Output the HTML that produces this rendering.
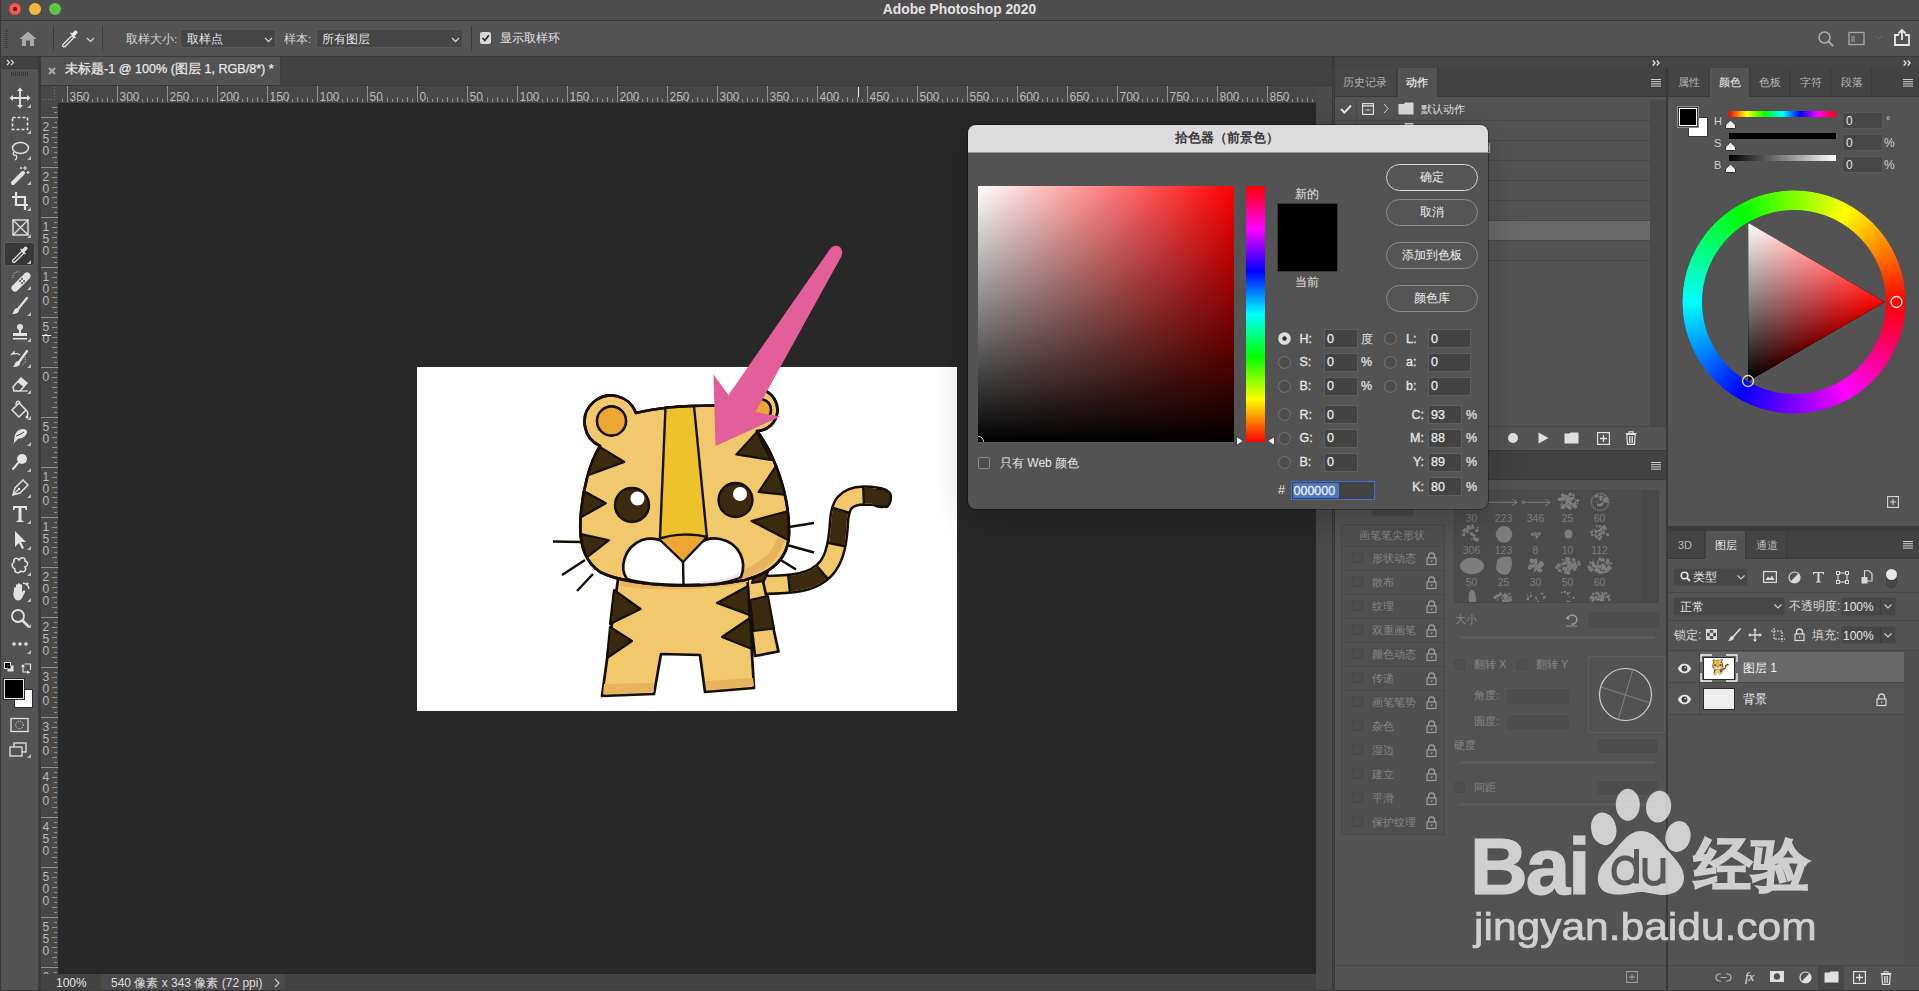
<!DOCTYPE html>
<html><head><meta charset="utf-8">
<style>
*{box-sizing:border-box;margin:0;padding:0}
html,body{width:1919px;height:991px;overflow:hidden;background:#535353;font-family:"Liberation Sans",sans-serif;color:#d6d6d6;font-size:12px;position:relative}
.a{position:absolute}
.t{position:absolute;white-space:nowrap;line-height:1}
svg{overflow:visible}
.pl{mix-blend-mode:screen}
@supports (mix-blend-mode:plus-lighter){.pl{mix-blend-mode:plus-lighter}}
</style></head>
<body>
<div class="a" style="left:0;top:0;width:1919px;height:21px;background:#4e4e4e;border-bottom:1px solid #363636"></div>
<div class="a" style="left:0;top:0;width:1px;height:991px;background:#3a3a3a;z-index:50"></div>
<div class="a" style="left:9px;top:3px;width:12px;height:12px;border-radius:50%;background:#ec5f58;box-shadow:inset 0 0 0 0.5px #c9463f"></div>
<div class="a" style="left:13px;top:7px;width:4px;height:4px;border-radius:50%;background:#6e0a06"></div>
<div class="a" style="left:29px;top:3px;width:12px;height:12px;border-radius:50%;background:#f2b83c"></div>
<div class="a" style="left:49px;top:3px;width:12px;height:12px;border-radius:50%;background:#5ec244"></div>
<div class="t" style="left:0;width:1919px;text-align:center;top:3px;font-size:13.8px;font-weight:bold;color:#e2e2e2">Adobe Photoshop 2020</div>
<div class="a" style="left:0;top:21px;width:1919px;height:36px;background:#535353;border-bottom:1px solid #3a3a3a"></div>
<svg class="a" style="left:5px;top:29px" width="4" height="20" fill="#3c3c3c"><rect x="0" y="0" width="3" height="1"/><rect x="0" y="2" width="3" height="1"/><rect x="0" y="4" width="3" height="1"/><rect x="0" y="6" width="3" height="1"/><rect x="0" y="8" width="3" height="1"/><rect x="0" y="10" width="3" height="1"/><rect x="0" y="12" width="3" height="1"/><rect x="0" y="14" width="3" height="1"/><rect x="0" y="16" width="3" height="1"/><rect x="0" y="18" width="3" height="1"/></svg>
<svg class="a" style="left:19px;top:31px" width="18" height="16" viewBox="0 0 18 16"><path d="M9 0.5 L17.5 8 L15 8 L15 15 L11 15 L11 9.5 L7 9.5 L7 15 L3 15 L3 8 L0.5 8 Z" fill="#a9a9a9"/></svg>
<div class="a" style="left:53px;top:26px;width:1px;height:25px;background:#3c3c3c"></div>
<svg class="a" style="left:61px;top:29px" width="19" height="19" viewBox="0 0 19 19"><path d="M3 16.5 L11 8.5" stroke="#e8e8e8" stroke-width="4" stroke-linecap="round" fill="none"/><path d="M3 16.5 L11 8.5" stroke="#535353" stroke-width="1.6" stroke-linecap="round" fill="none"/><path d="M9.5 5 L14 9.5 L15 8.5 L13.5 7 L16.5 4 A2 2 0 0 0 14 1.5 L11 4.5 L9.5 3 Z" fill="#e8e8e8"/></svg>
<svg class="a" style="left:86px;top:37px" width="9" height="6"><path d="M1 1 L4.5 4.5 L8 1" stroke="#d0d0d0" stroke-width="1.3" fill="none"/></svg>
<div class="a" style="left:102px;top:26px;width:1px;height:25px;background:#3c3c3c"></div>
<div class="t" style="left:126px;top:33px;font-size:11.7px;color:#d4d4d4">取样大小:</div>
<div class="a" style="left:180px;top:29px;width:96px;height:19px;background:#454545;border:1px solid #595959;border-radius:3px"></div>
<div class="t" style="left:187px;top:34px;font-size:11.5px;color:#e6e6e6">取样点</div>
<svg class="a" style="left:264px;top:37px" width="9" height="6"><path d="M1 1 L4.5 4.5 L8 1" stroke="#d0d0d0" stroke-width="1.3" fill="none"/></svg>
<div class="t" style="left:284px;top:33px;font-size:11.7px;color:#d4d4d4">样本:</div>
<div class="a" style="left:316px;top:29px;width:147px;height:19px;background:#454545;border:1px solid #595959;border-radius:3px"></div>
<div class="t" style="left:322px;top:34px;font-size:11.5px;color:#e6e6e6">所有图层</div>
<svg class="a" style="left:451px;top:37px" width="9" height="6"><path d="M1 1 L4.5 4.5 L8 1" stroke="#d0d0d0" stroke-width="1.3" fill="none"/></svg>
<div class="a" style="left:471px;top:26px;width:1px;height:25px;background:#3c3c3c"></div>
<div class="a" style="left:480px;top:32px;width:11px;height:12px;background:#d8d8d8;border-radius:2px"></div>
<svg class="a" style="left:480px;top:32px" width="11" height="12"><path d="M2.5 6 L4.8 8.5 L8.8 3.2" stroke="#2a2a2a" stroke-width="1.7" fill="none"/></svg>
<div class="t" style="left:500px;top:33px;font-size:11.5px;color:#e0e0e0">显示取样环</div>
<svg class="a" style="left:1817px;top:30px" width="18" height="18"><circle cx="7.5" cy="7.5" r="5.5" stroke="#a8a8a8" stroke-width="1.6" fill="none"/><path d="M11.5 11.5 L16 16" stroke="#a8a8a8" stroke-width="1.8"/></svg>
<svg class="a" style="left:1848px;top:31px" width="18" height="15"><rect x="1" y="1.5" width="15" height="12" stroke="#a8a8a8" stroke-width="1.3" fill="none"/><path d="M4 5 V11 M6 5 V11" stroke="#a8a8a8" stroke-width="1"/></svg>
<svg class="a" style="left:1875px;top:35px" width="8" height="5"><path d="M1 1 L4 4 L7 1" stroke="#6e6e6e" stroke-width="1" fill="none"/></svg>
<svg class="a" style="left:1893px;top:28px" width="18" height="19"><path d="M6 7 H2 V17 H16 V7 H12" stroke="#e6e6e6" stroke-width="1.8" fill="none"/><path d="M9 12 V2 M5.5 5.5 L9 2 L12.5 5.5" stroke="#e6e6e6" stroke-width="1.8" fill="none"/></svg>
<div class="a" style="left:1px;top:57px;width:37px;height:934px;background:#535353"></div>
<div class="a" style="left:1px;top:57px;width:37px;height:12px;background:#424242;border-bottom:1px solid #3a3a3a"></div>
<svg class="a" style="left:6px;top:59px" width="10" height="7"><path d="M1 1 L3.5 3.5 L1 6 M5 1 L7.5 3.5 L5 6" stroke="#d8d8d8" stroke-width="1.2" fill="none"/></svg>
<svg class="a" style="left:11px;top:72px" width="18" height="4" fill="#3a3a3a"><rect x="0" y="0" width="1" height="4"/><rect x="2" y="0" width="1" height="4"/><rect x="4" y="0" width="1" height="4"/><rect x="6" y="0" width="1" height="4"/><rect x="8" y="0" width="1" height="4"/><rect x="10" y="0" width="1" height="4"/><rect x="12" y="0" width="1" height="4"/><rect x="14" y="0" width="1" height="4"/><rect x="16" y="0" width="1" height="4"/></svg>
<div class="a" style="left:38px;top:57px;width:3px;height:934px;background:#3b3b3b"></div>
<div class="a" style="left:4px;top:242px;width:31px;height:24px;background:#383838;border:1px solid #5e5e5e;border-radius:3px"></div>
<svg class="a" style="left:8px;top:86px" width="26" height="24" viewBox="0 0 26 24"><path d="M12 3 V21 M3 12 H21" stroke="#e2e2e2" stroke-width="1.8"/><path d="M12 1.5 L9 5 H15Z M12 22.5 L9 19 H15Z M1.5 12 L5 9 V15Z M22.5 12 L19 9 V15Z" fill="#e2e2e2"/><path d="M23 18 L23 22 L19 22 Z" fill="#bdbdbd"/></svg>
<svg class="a" style="left:8px;top:112px" width="26" height="24" viewBox="0 0 26 24"><rect x="4.5" y="5.5" width="15" height="12" stroke="#e2e2e2" fill="none" stroke-width="1.6" stroke-dasharray="3 2"/><path d="M23 18 L23 22 L19 22 Z" fill="#bdbdbd"/></svg>
<svg class="a" style="left:8px;top:138px" width="26" height="24" viewBox="0 0 26 24"><ellipse cx="12.5" cy="10" rx="8" ry="5.5" stroke="#e2e2e2" fill="none" stroke-width="1.5"/><path d="M6 14 C4 16 6 18 8 17 C9 19 9 21 7 22" stroke="#e2e2e2" fill="none" stroke-width="1.3"/><path d="M23 18 L23 22 L19 22 Z" fill="#bdbdbd"/></svg>
<svg class="a" style="left:8px;top:163px" width="26" height="24" viewBox="0 0 26 24"><path d="M5 20 L15 10" stroke="#e2e2e2" stroke-width="4" stroke-linecap="round"/><path d="M17 3 V7 M15 5 H19 M20 8 V11 M18.5 9.5 H21.5 M13 4 V6 M12 5 H14" stroke="#e2e2e2" stroke-width="1.2"/><path d="M23 18 L23 22 L19 22 Z" fill="#bdbdbd"/></svg>
<svg class="a" style="left:8px;top:189px" width="26" height="24" viewBox="0 0 26 24"><path d="M8 3 V16 H20 M4 8 H17 V21" stroke="#e2e2e2" fill="none" stroke-width="2.2"/><path d="M23 18 L23 22 L19 22 Z" fill="#bdbdbd"/></svg>
<svg class="a" style="left:8px;top:216px" width="26" height="24" viewBox="0 0 26 24"><rect x="5" y="4" width="15" height="15" stroke="#e2e2e2" fill="none" stroke-width="1.4"/><path d="M5 4 L20 19 M20 4 L5 19" stroke="#e2e2e2" fill="none" stroke-width="1.2"/><path d="M23 18 L23 22 L19 22 Z" fill="#bdbdbd"/></svg>
<svg class="a" style="left:8px;top:242px" width="26" height="24" viewBox="0 0 26 24"><path d="M6 19 L14 11" stroke="#e2e2e2" stroke-width="4" stroke-linecap="round"/><path d="M6 19 L14 11" stroke="#383838" stroke-width="1.6" stroke-linecap="round"/><path d="M12.5 8 L17 12.5 L18 11.5 L16.5 10 L19.5 7 A2 2 0 0 0 17 4.5 L14 7.5 L12.5 6 Z" fill="#e2e2e2"/><path d="M23 18 L23 22 L19 22 Z" fill="#bdbdbd"/></svg>
<svg class="a" style="left:8px;top:268px" width="26" height="24" viewBox="0 0 26 24"><path d="M7 20 L19 8" stroke="#e2e2e2" stroke-width="7" stroke-linecap="round"/><circle cx="12" cy="13" r="1" fill="#535353"/><circle cx="14" cy="15" r="1" fill="#535353"/><circle cx="14" cy="11" r="1" fill="#535353"/><circle cx="16" cy="13" r="1" fill="#535353"/><path d="M5 10 A5 5 0 0 1 11 4" stroke="#e2e2e2" fill="none" stroke-width="1" stroke-dasharray="1 1.2"/><path d="M23 18 L23 22 L19 22 Z" fill="#bdbdbd"/></svg>
<svg class="a" style="left:8px;top:294px" width="26" height="24" viewBox="0 0 26 24"><path d="M10 15 L19 4" stroke="#e2e2e2" stroke-width="2.2" stroke-linecap="round"/><path d="M9.5 14 C6 14 6 18 4 20 C8 20 11 19 11 16 Z" fill="#e2e2e2"/><path d="M23 18 L23 22 L19 22 Z" fill="#bdbdbd"/></svg>
<svg class="a" style="left:8px;top:320px" width="26" height="24" viewBox="0 0 26 24"><circle cx="12" cy="7" r="3" fill="#e2e2e2"/><rect x="11" y="9" width="2" height="4" fill="#e2e2e2"/><rect x="5" y="13" width="14" height="3" fill="#e2e2e2"/><rect x="5" y="18" width="14" height="1.5" fill="#e2e2e2"/><path d="M23 18 L23 22 L19 22 Z" fill="#bdbdbd"/></svg>
<svg class="a" style="left:8px;top:346px" width="26" height="24" viewBox="0 0 26 24"><path d="M11 16 L19 5" stroke="#e2e2e2" stroke-width="2.2" stroke-linecap="round"/><path d="M10.5 15 C7 15 7 19 5 21 C9 21 12 20 12 17 Z" fill="#e2e2e2"/><path d="M3 9 L6 6 L6 8 C9 7 11 8 12 9" stroke="#e2e2e2" fill="none" stroke-width="1.3"/><path d="M17 11 A6 6 0 0 1 14 19" stroke="#e2e2e2" fill="none" stroke-width="1" stroke-dasharray="1 1.2"/><path d="M23 18 L23 22 L19 22 Z" fill="#bdbdbd"/></svg>
<svg class="a" style="left:8px;top:372px" width="26" height="24" viewBox="0 0 26 24"><path d="M5 15 L13 6 L19 11 L12 19 L6 19 Z" stroke="#e2e2e2" fill="none" stroke-width="1.5"/><path d="M13 6 L19 11 L15.5 15 L9.5 10 Z" fill="#e2e2e2"/><path d="M12 19 H20" stroke="#e2e2e2" fill="none" stroke-width="1.2"/><path d="M23 18 L23 22 L19 22 Z" fill="#bdbdbd"/></svg>
<svg class="a" style="left:8px;top:398px" width="26" height="24" viewBox="0 0 26 24"><path d="M4 12 L11 5 L18 12 L11 19 Z" stroke="#e2e2e2" fill="none" stroke-width="1.5"/><path d="M8 7 C8 2 12 2 12 6" stroke="#e2e2e2" fill="none" stroke-width="1.3"/><path d="M18 12 C20 14 20 17 19 19" stroke="#e2e2e2" fill="none" stroke-width="1.5"/><circle cx="19" cy="19" r="1.5" fill="#e2e2e2"/><path d="M23 18 L23 22 L19 22 Z" fill="#bdbdbd"/></svg>
<svg class="a" style="left:8px;top:424px" width="26" height="24" viewBox="0 0 26 24"><path d="M6 18 C6 10 9 5 15 5 C20 5 20 9 17 12 C14 15 12 14 10 15 L5 20" fill="#e2e2e2"/><path d="M8 12 C11 11 13 10 16 8" stroke="#535353" stroke-width="1"/><path d="M23 18 L23 22 L19 22 Z" fill="#bdbdbd"/></svg>
<svg class="a" style="left:8px;top:450px" width="26" height="24" viewBox="0 0 26 24"><circle cx="14" cy="9" r="5" fill="#e2e2e2"/><path d="M11 12 L5 19" stroke="#e2e2e2" stroke-width="2" stroke-linecap="round"/><path d="M23 18 L23 22 L19 22 Z" fill="#bdbdbd"/></svg>
<svg class="a" style="left:8px;top:476px" width="26" height="24" viewBox="0 0 26 24"><path d="M5 19 L7 12 L15 4 L20 9 L12 17 Z" stroke="#e2e2e2" fill="none" stroke-width="1.5"/><path d="M5 19 L10.5 13.5" stroke="#e2e2e2" fill="none" stroke-width="1.2"/><circle cx="11" cy="13" r="1.2" fill="#e2e2e2"/><path d="M23 18 L23 22 L19 22 Z" fill="#bdbdbd"/></svg>
<svg class="a" style="left:8px;top:502px" width="26" height="24" viewBox="0 0 26 24"><path d="M5 4 H19 V8 H17.5 L17 6 H13.5 V18.5 L15.5 19 V20 H8.5 V19 L10.5 18.5 V6 H7 L6.5 8 H5 Z" fill="#e2e2e2"/><path d="M23 18 L23 22 L19 22 Z" fill="#bdbdbd"/></svg>
<svg class="a" style="left:8px;top:528px" width="26" height="24" viewBox="0 0 26 24"><path d="M7 3 L7 19 L11 15 L14 21 L16 20 L13 14 L18 14 Z" fill="#e2e2e2"/><path d="M23 18 L23 22 L19 22 Z" fill="#bdbdbd"/></svg>
<svg class="a" style="left:8px;top:554px" width="26" height="24" viewBox="0 0 26 24"><path d="M6 8 C5 4 9 3 11 6 C13 3 18 3 17 7 C21 8 20 12 17 13 C19 16 16 19 13 17 C11 20 6 19 7 15 C4 14 3 10 6 8 Z" stroke="#e2e2e2" fill="none" stroke-width="1.5"/><path d="M23 18 L23 22 L19 22 Z" fill="#bdbdbd"/></svg>
<svg class="a" style="left:8px;top:580px" width="26" height="24" viewBox="0 0 26 24"><path d="M8 20 C5 17 5 13 6 11 V8 C6 7 8 7 8 8 V11 V5 C8 4 10 4 10 5 V11 V4 C10 3 12 3 12 4 V11 V5 C12 4 14 4 14 5 V12 L15 11 C16 10 18 11 17 12 L14 18 C13 20 11 21 8 20 Z" fill="#e2e2e2"/><path d="M15 3 A7 7 0 0 1 21 9" stroke="#e2e2e2" fill="none" stroke-width="1.3"/><path d="M19 2 L21 4 L18 5 Z" fill="#e2e2e2"/><path d="M23 18 L23 22 L19 22 Z" fill="#bdbdbd"/></svg>
<svg class="a" style="left:8px;top:606px" width="26" height="24" viewBox="0 0 26 24"><circle cx="10" cy="10" r="6" stroke="#e2e2e2" fill="none" stroke-width="1.8"/><path d="M14.5 14.5 L20 20" stroke="#e2e2e2" stroke-width="2.5" stroke-linecap="round"/><path d="M23 18 L23 22 L19 22 Z" fill="#bdbdbd"/></svg>
<svg class="a" style="left:8px;top:632px" width="26" height="24" viewBox="0 0 26 24"><circle cx="6" cy="12" r="1.8" fill="#e2e2e2"/><circle cx="12" cy="12" r="1.8" fill="#e2e2e2"/><circle cx="18" cy="12" r="1.8" fill="#e2e2e2"/></svg>
<svg class="a" style="left:27px;top:650px" width="5" height="5"><path d="M4 0 V4 H0 Z" fill="#bdbdbd"/></svg>
<svg class="a" style="left:4px;top:662px" width="10" height="10"><rect x="0.5" y="0.5" width="6" height="6" fill="#000" stroke="#e2e2e2"/><rect x="3.5" y="3.5" width="6" height="6" fill="#e2e2e2"/><rect x="3.5" y="3.5" width="3" height="3" fill="#000"/></svg>
<svg class="a" style="left:21px;top:662px" width="12" height="12"><path d="M2 5 V10 H8 M3.5 2 H9.5 V8" stroke="#e2e2e2" stroke-width="1.2" fill="none"/><path d="M0 5 L2 2 L4 5 Z M6 8.5 L9.5 10.5 L6 12Z" fill="#e2e2e2"/></svg>
<div class="a" style="left:14px;top:689px;width:19px;height:19px;background:#fff;border:1px solid #2a2a2a"></div>
<div class="a" style="left:4px;top:679px;width:20px;height:20px;background:#000;border:1px solid #e8e8e8;box-shadow:0 0 0 1px #2a2a2a"></div>
<svg class="a" style="left:10px;top:717px" width="20" height="17"><rect x="1" y="1.5" width="17" height="13" stroke="#e2e2e2" stroke-width="1.3" fill="none"/><circle cx="9.5" cy="8" r="3.8" stroke="#e2e2e2" stroke-width="1" stroke-dasharray="1 1" fill="none"/></svg>
<svg class="a" style="left:8px;top:742px" width="26" height="18"><rect x="6" y="1" width="12" height="9" stroke="#e2e2e2" stroke-width="1.3" fill="#535353"/><rect x="2" y="5" width="12" height="9" stroke="#e2e2e2" stroke-width="1.3" fill="#535353"/><path d="M23 12 V16 H19 Z" fill="#bdbdbd"/></svg>
<div class="a" style="left:41px;top:57px;width:1292px;height:29px;background:#424242;border-bottom:1px solid #383838"></div>
<div class="a" style="left:41px;top:57px;width:240px;height:28px;background:#535353;border-right:1px solid #3e3e3e"></div>
<svg class="a" style="left:48px;top:67px" width="8" height="8"><path d="M1 1 L7 7 M7 1 L1 7" stroke="#a8a8a8" stroke-width="2"/></svg>
<div class="t" style="left:65px;top:63px;font-size:12.6px;color:#e8e8e8;-webkit-text-stroke:0.25px #e8e8e8">未标题-1 @ 100% (图层 1, RGB/8*) *</div>
<div class="a" style="left:41px;top:86px;width:1275px;height:17px;background:#474747"></div>
<div class="a" style="left:41px;top:103px;width:17px;height:871px;background:#474747"></div>
<svg class="a" style="left:0;top:0" width="1320" height="104"><path d="M62.5 99V102M67.5 86V102M72.5 99V102M77.5 97V102M82.5 99V102M87.5 97V102M92.5 99V102M97.5 97V102M102.5 99V102M107.5 97V102M112.5 99V102M117.5 86V102M122.5 99V102M127.5 97V102M132.5 99V102M137.5 97V102M142.5 99V102M147.5 97V102M152.5 99V102M157.5 97V102M162.5 99V102M167.5 86V102M172.5 99V102M177.5 97V102M182.5 99V102M187.5 97V102M192.5 99V102M197.5 97V102M202.5 99V102M207.5 97V102M212.5 99V102M217.5 86V102M222.5 99V102M227.5 97V102M232.5 99V102M237.5 97V102M242.5 99V102M247.5 97V102M252.5 99V102M257.5 97V102M262.5 99V102M267.5 86V102M272.5 99V102M277.5 97V102M282.5 99V102M287.5 97V102M292.5 99V102M297.5 97V102M302.5 99V102M307.5 97V102M312.5 99V102M317.5 86V102M322.5 99V102M327.5 97V102M332.5 99V102M337.5 97V102M342.5 99V102M347.5 97V102M352.5 99V102M357.5 97V102M362.5 99V102M367.5 86V102M372.5 99V102M377.5 97V102M382.5 99V102M387.5 97V102M392.5 99V102M397.5 97V102M402.5 99V102M407.5 97V102M412.5 99V102M417.5 86V102M422.5 99V102M427.5 97V102M432.5 99V102M437.5 97V102M442.5 99V102M447.5 97V102M452.5 99V102M457.5 97V102M462.5 99V102M467.5 86V102M472.5 99V102M477.5 97V102M482.5 99V102M487.5 97V102M492.5 99V102M497.5 97V102M502.5 99V102M507.5 97V102M512.5 99V102M517.5 86V102M522.5 99V102M527.5 97V102M532.5 99V102M537.5 97V102M542.5 99V102M547.5 97V102M552.5 99V102M557.5 97V102M562.5 99V102M567.5 86V102M572.5 99V102M577.5 97V102M582.5 99V102M587.5 97V102M592.5 99V102M597.5 97V102M602.5 99V102M607.5 97V102M612.5 99V102M617.5 86V102M622.5 99V102M627.5 97V102M632.5 99V102M637.5 97V102M642.5 99V102M647.5 97V102M652.5 99V102M657.5 97V102M662.5 99V102M667.5 86V102M672.5 99V102M677.5 97V102M682.5 99V102M687.5 97V102M692.5 99V102M697.5 97V102M702.5 99V102M707.5 97V102M712.5 99V102M717.5 86V102M722.5 99V102M727.5 97V102M732.5 99V102M737.5 97V102M742.5 99V102M747.5 97V102M752.5 99V102M757.5 97V102M762.5 99V102M767.5 86V102M772.5 99V102M777.5 97V102M782.5 99V102M787.5 97V102M792.5 99V102M797.5 97V102M802.5 99V102M807.5 97V102M812.5 99V102M817.5 86V102M822.5 99V102M827.5 97V102M832.5 99V102M837.5 97V102M842.5 99V102M847.5 97V102M852.5 99V102M857.5 97V102M862.5 99V102M867.5 86V102M872.5 99V102M877.5 97V102M882.5 99V102M887.5 97V102M892.5 99V102M897.5 97V102M902.5 99V102M907.5 97V102M912.5 99V102M917.5 86V102M922.5 99V102M927.5 97V102M932.5 99V102M937.5 97V102M942.5 99V102M947.5 97V102M952.5 99V102M957.5 97V102M962.5 99V102M967.5 86V102M972.5 99V102M977.5 97V102M982.5 99V102M987.5 97V102M992.5 99V102M997.5 97V102M1002.5 99V102M1007.5 97V102M1012.5 99V102M1017.5 86V102M1022.5 99V102M1027.5 97V102M1032.5 99V102M1037.5 97V102M1042.5 99V102M1047.5 97V102M1052.5 99V102M1057.5 97V102M1062.5 99V102M1067.5 86V102M1072.5 99V102M1077.5 97V102M1082.5 99V102M1087.5 97V102M1092.5 99V102M1097.5 97V102M1102.5 99V102M1107.5 97V102M1112.5 99V102M1117.5 86V102M1122.5 99V102M1127.5 97V102M1132.5 99V102M1137.5 97V102M1142.5 99V102M1147.5 97V102M1152.5 99V102M1157.5 97V102M1162.5 99V102M1167.5 86V102M1172.5 99V102M1177.5 97V102M1182.5 99V102M1187.5 97V102M1192.5 99V102M1197.5 97V102M1202.5 99V102M1207.5 97V102M1212.5 99V102M1217.5 86V102M1222.5 99V102M1227.5 97V102M1232.5 99V102M1237.5 97V102M1242.5 99V102M1247.5 97V102M1252.5 99V102M1257.5 97V102M1262.5 99V102M1267.5 86V102M1272.5 99V102M1277.5 97V102M1282.5 99V102M1287.5 97V102M1292.5 99V102M1297.5 97V102M1302.5 99V102M1307.5 97V102M1312.5 99V102" stroke="#8e8e8e" stroke-width="1"/><g font-family="Liberation Sans" font-size="12" fill="#b8b8b8"><text x="69.5" y="101">350</text><text x="119.5" y="101">300</text><text x="169.5" y="101">250</text><text x="219.5" y="101">200</text><text x="269.5" y="101">150</text><text x="319.5" y="101">100</text><text x="369.5" y="101">50</text><text x="419.5" y="101">0</text><text x="469.5" y="101">50</text><text x="519.5" y="101">100</text><text x="569.5" y="101">150</text><text x="619.5" y="101">200</text><text x="669.5" y="101">250</text><text x="719.5" y="101">300</text><text x="769.5" y="101">350</text><text x="819.5" y="101">400</text><text x="869.5" y="101">450</text><text x="919.5" y="101">500</text><text x="969.5" y="101">550</text><text x="1019.5" y="101">600</text><text x="1069.5" y="101">650</text><text x="1119.5" y="101">700</text><text x="1169.5" y="101">750</text><text x="1219.5" y="101">800</text><text x="1269.5" y="101">850</text></g></svg>
<svg class="a" style="left:41px;top:86px" width="17" height="17"><path d="M13.5 1 V14 M1 13.5 H14" stroke="#777" stroke-width="1" stroke-dasharray="1 2"/></svg>
<div class="a" style="left:858px;top:87px;width:1px;height:10px;background:#f0f0f0"></div>
<div class="a" style="left:41px;top:103px;width:17px;height:871px;overflow:hidden"><svg class="a" style="left:-41px;top:-103px" width="60" height="980"><path d="M52 107.5H57M54 112.5H57M41 117.5H58M54 122.5H57M52 127.5H57M54 132.5H57M52 137.5H57M54 142.5H57M52 147.5H57M54 152.5H57M52 157.5H57M54 162.5H57M41 167.5H58M54 172.5H57M52 177.5H57M54 182.5H57M52 187.5H57M54 192.5H57M52 197.5H57M54 202.5H57M52 207.5H57M54 212.5H57M41 217.5H58M54 222.5H57M52 227.5H57M54 232.5H57M52 237.5H57M54 242.5H57M52 247.5H57M54 252.5H57M52 257.5H57M54 262.5H57M41 267.5H58M54 272.5H57M52 277.5H57M54 282.5H57M52 287.5H57M54 292.5H57M52 297.5H57M54 302.5H57M52 307.5H57M54 312.5H57M41 317.5H58M54 322.5H57M52 327.5H57M54 332.5H57M52 337.5H57M54 342.5H57M52 347.5H57M54 352.5H57M52 357.5H57M54 362.5H57M41 367.5H58M54 372.5H57M52 377.5H57M54 382.5H57M52 387.5H57M54 392.5H57M52 397.5H57M54 402.5H57M52 407.5H57M54 412.5H57M41 417.5H58M54 422.5H57M52 427.5H57M54 432.5H57M52 437.5H57M54 442.5H57M52 447.5H57M54 452.5H57M52 457.5H57M54 462.5H57M41 467.5H58M54 472.5H57M52 477.5H57M54 482.5H57M52 487.5H57M54 492.5H57M52 497.5H57M54 502.5H57M52 507.5H57M54 512.5H57M41 517.5H58M54 522.5H57M52 527.5H57M54 532.5H57M52 537.5H57M54 542.5H57M52 547.5H57M54 552.5H57M52 557.5H57M54 562.5H57M41 567.5H58M54 572.5H57M52 577.5H57M54 582.5H57M52 587.5H57M54 592.5H57M52 597.5H57M54 602.5H57M52 607.5H57M54 612.5H57M41 617.5H58M54 622.5H57M52 627.5H57M54 632.5H57M52 637.5H57M54 642.5H57M52 647.5H57M54 652.5H57M52 657.5H57M54 662.5H57M41 667.5H58M54 672.5H57M52 677.5H57M54 682.5H57M52 687.5H57M54 692.5H57M52 697.5H57M54 702.5H57M52 707.5H57M54 712.5H57M41 717.5H58M54 722.5H57M52 727.5H57M54 732.5H57M52 737.5H57M54 742.5H57M52 747.5H57M54 752.5H57M52 757.5H57M54 762.5H57M41 767.5H58M54 772.5H57M52 777.5H57M54 782.5H57M52 787.5H57M54 792.5H57M52 797.5H57M54 802.5H57M52 807.5H57M54 812.5H57M41 817.5H58M54 822.5H57M52 827.5H57M54 832.5H57M52 837.5H57M54 842.5H57M52 847.5H57M54 852.5H57M52 857.5H57M54 862.5H57M41 867.5H58M54 872.5H57M52 877.5H57M54 882.5H57M52 887.5H57M54 892.5H57M52 897.5H57M54 902.5H57M52 907.5H57M54 912.5H57M41 917.5H58M54 922.5H57M52 927.5H57M54 932.5H57M52 937.5H57M54 942.5H57M52 947.5H57M54 952.5H57M52 957.5H57M54 962.5H57M41 967.5H58M54 972.5H57" stroke="#8e8e8e" stroke-width="1"/><g font-family="Liberation Sans" font-size="12" fill="#b8b8b8"><text x="42.5" y="130.5">2</text><text x="42.5" y="142.5">5</text><text x="42.5" y="154.5">0</text><text x="42.5" y="180.5">2</text><text x="42.5" y="192.5">0</text><text x="42.5" y="204.5">0</text><text x="42.5" y="230.5">1</text><text x="42.5" y="242.5">5</text><text x="42.5" y="254.5">0</text><text x="42.5" y="280.5">1</text><text x="42.5" y="292.5">0</text><text x="42.5" y="304.5">0</text><text x="42.5" y="330.5">5</text><text x="42.5" y="342.5">0</text><text x="42.5" y="380.5">0</text><text x="42.5" y="430.5">5</text><text x="42.5" y="442.5">0</text><text x="42.5" y="480.5">1</text><text x="42.5" y="492.5">0</text><text x="42.5" y="504.5">0</text><text x="42.5" y="530.5">1</text><text x="42.5" y="542.5">5</text><text x="42.5" y="554.5">0</text><text x="42.5" y="580.5">2</text><text x="42.5" y="592.5">0</text><text x="42.5" y="604.5">0</text><text x="42.5" y="630.5">2</text><text x="42.5" y="642.5">5</text><text x="42.5" y="654.5">0</text><text x="42.5" y="680.5">3</text><text x="42.5" y="692.5">0</text><text x="42.5" y="704.5">0</text><text x="42.5" y="730.5">3</text><text x="42.5" y="742.5">5</text><text x="42.5" y="754.5">0</text><text x="42.5" y="780.5">4</text><text x="42.5" y="792.5">0</text><text x="42.5" y="804.5">0</text><text x="42.5" y="830.5">4</text><text x="42.5" y="842.5">5</text><text x="42.5" y="854.5">0</text><text x="42.5" y="880.5">5</text><text x="42.5" y="892.5">0</text><text x="42.5" y="904.5">0</text><text x="42.5" y="930.5">5</text><text x="42.5" y="942.5">5</text><text x="42.5" y="954.5">0</text><text x="42.5" y="980.5">6</text><text x="42.5" y="992.5">0</text><text x="42.5" y="1004.5">0</text></g></svg></div>
<div class="a" style="left:42px;top:335px;width:9px;height:1px;background:#f0f0f0"></div>
<div class="a" style="left:58px;top:103px;width:1258px;height:871px;background:#282828"></div>
<div class="a" style="left:1316px;top:86px;width:16px;height:888px;background:#4a4a4a"></div>
<div class="a" style="left:41px;top:974px;width:1275px;height:17px;background:#434343"></div>
<div class="a" style="left:1316px;top:974px;width:16px;height:17px;background:#4b4b4b"></div>
<div class="a" style="left:0;top:990px;width:1919px;height:1px;background:#383838;z-index:5"></div>
<div class="a" style="left:101px;top:974px;width:184px;height:17px;background:#4a4a4a"></div>
<div class="t" style="left:56px;top:977px;font-size:12px;color:#e6e6e6">100%</div>
<div class="t" style="left:111px;top:977px;font-size:12px;color:#dcdcdc">540 像素 x 343 像素 (72 ppi)</div>
<svg class="a" style="left:274px;top:978px" width="6" height="10"><path d="M1 1 L5 5 L1 9" stroke="#cfcfcf" stroke-width="1.2" fill="none"/></svg>
<div class="a" style="left:1332px;top:57px;width:3px;height:934px;background:#3a3a3a"></div>
<div class="a" style="left:1333px;top:68px;width:1px;height:923px;background:#444"></div>
<div class="a" style="left:417px;top:367px;width:540px;height:344px;background:#fff"></div>
<svg class="a" style="left:417px;top:367px" width="540" height="344" viewBox="417 367 540 344"><path d="M756 585 C790 585 815 584 828 566 C836 555 838 540 839 522 C840 505 845 496 864 495.5 C872 495.5 878 496.5 881 498" stroke="#140e06" stroke-width="20.5" fill="none" stroke-linecap="round"/><path d="M756 585 C790 585 815 584 828 566 C836 555 838 540 839 522 C840 505 845 496 864 495.5 C872 495.5 878 496.5 881 498" stroke="#f1c86c" stroke-width="15.5" fill="none"/><path d="M756 585 C790 585 815 584 828 566 C836 555 838 540 839 522 C840 505 845 496 864 495.5 C872 495.5 878 496.5 881 498" stroke="#3b2b0e" stroke-width="15.5" fill="none" stroke-dasharray="0 33 36 31.6 34.9 29.1 40" stroke-linecap="butt"/><path d="M878 488 C886 489 891 492 891 497 C891 501 889 505 887 507 L876 506 Z" fill="#3b2b0e" stroke="#140e06" stroke-width="2.4" stroke-linejoin="round"/><path d="M872 489.5 L880 490 L881 505 L872 505 Z" fill="#3b2b0e"/><path d="M789.9 593.0L788.1 575.1M828.2 579.0L816.4 565.4M845.4 546.3L827.7 542.9M849.5 512.7L832.2 507.5M863.8 504.5L863.1 486.5" stroke="#140e06" stroke-width="2.2"/><path d="M745 572 L761 572 L778.5 651.5 L755 656 Z" fill="#f1c86c" stroke="#140e06" stroke-width="2.7" stroke-linejoin="round"/><path d="M750 600 L768 596 L774 628.5 L753.5 631 Z M755 572 L768 572 L764 581 L752 583 Z" fill="#3b2b0e" stroke="#140e06" stroke-width="2" stroke-linejoin="round"/><path d="M619 572 L602 696 L654 694 L661 654 L700 655 L705 692 L754 688 L747 572 Z" fill="#f1c86c" stroke="#140e06" stroke-width="2.7" stroke-linejoin="round"/><path d="M604 684 L653 683 L654 692 L603 694 Z M706 681 L753 678 L754 686 L706 690 Z" fill="#e9b35e"/><path d="M620 586 C660 592 720 590 748 582 L748 578 C720 586 660 588 620 580 Z" fill="#eab55c"/><path d="M614 590 L640.5 609 L610 624 Z M610 627 L632 641 L607 658 Z M748 586 L717 603 L749.5 615 Z M750 618 L722 637 L752 649 Z" fill="#3b2b0e" stroke="#140e06" stroke-width="2.2" stroke-linejoin="round"/><path d="M600 446 A26.5 26.5 0 1 1 636 413 C660 407 690 405.5 712 405.5 C725 405.5 733 404 738 400 A21 21 0 1 1 757 431 C775 455 789 495 789 530 C790 555 775 572 745 580 C720 585 700 585.5 683 585.5 C650 585 620 582 600 572 C585 562 579 545 580.5 520 C582 490 590 462 600 446 Z" fill="#f1c86c" stroke="#140e06" stroke-width="2.7" stroke-linejoin="round"/><circle cx="611.5" cy="421" r="14.5" fill="#eba733" stroke="#140e06" stroke-width="2.4"/><circle cx="760" cy="410" r="11" fill="#eba733" stroke="#140e06" stroke-width="2.4"/><path d="M786 505 C790 540 782 565 745 578 C725 583 705 584 690 584 C720 581 750 572 770 552 C780 538 784 520 786 505 Z" fill="#e8b35e"/><path d="M665.5 407.5 L694 406 L707 538 L660 538 Z" fill="#eec22c" stroke="#140e06" stroke-width="2.4" stroke-linejoin="round"/><defs><clipPath id="hc"><path d="M600 446 A26.5 26.5 0 1 1 636 413 C660 407 690 405.5 712 405.5 C725 405.5 733 404 738 400 A21 21 0 1 1 757 431 C775 455 789 495 789 530 C790 555 775 572 745 580 C720 585 700 585.5 683 585.5 C650 585 620 582 600 572 C585 562 579 545 580.5 520 C582 490 590 462 600 446 Z"/></clipPath></defs><g clip-path="url(#hc)"><path d="M598 446 L624.3 462 L586 476 Z M581 489.5 L605.8 503.3 L576 520 Z M576 533 L609 540.2 L581 562 Z M757 432 L736.4 454.5 L771 460 Z M776 466 L758.6 492 L787 495 Z M792 510 L751.5 521 L794 543 Z" fill="#3b2b0e" stroke="#140e06" stroke-width="2.2" stroke-linejoin="round"/></g><path d="M600 446 A26.5 26.5 0 1 1 636 413 C660 407 690 405.5 712 405.5 C725 405.5 733 404 738 400 A21 21 0 1 1 757 431 C775 455 789 495 789 530 C790 555 775 572 745 580 C720 585 700 585.5 683 585.5 C650 585 620 582 600 572 C585 562 579 545 580.5 520 C582 490 590 462 600 446 Z" fill="none" stroke="#140e06" stroke-width="2.7" stroke-linejoin="round"/><circle cx="611.5" cy="421" r="14.5" fill="#eba733" stroke="#140e06" stroke-width="2.4"/><circle cx="760" cy="410" r="11" fill="#eba733" stroke="#140e06" stroke-width="2.4"/><circle cx="632" cy="505" r="17" fill="#3b2b0e" stroke="#140e06" stroke-width="2.4"/><circle cx="637.5" cy="498.5" r="7" fill="#fff"/><circle cx="735.5" cy="500" r="17" fill="#3b2b0e" stroke="#140e06" stroke-width="2.4"/><circle cx="740" cy="494" r="7" fill="#fff"/><path d="M627 579 C620 570 622 548 642 540 C660 535 672 545 683 561 C693 545 705 536 720 539 C740 543 747 562 741 577 C725 583 705 585 683 585 C660 585 640 583 627 579 Z" fill="#fff" stroke="#140e06" stroke-width="2.7" stroke-linejoin="round"/><path d="M683 561 L683.5 585" stroke="#140e06" stroke-width="2.4"/><path d="M700 582 C718 581 733 578 740 572 L739 577 C725 582 712 583.5 700 583.5 Z" fill="#efe2f0"/><path d="M659 539 C672 534 693 533 707 537 L683 562 Z" fill="#eba733" stroke="#140e06" stroke-width="2.4" stroke-linejoin="round"/><path d="M553 541.5 L581 542 M562 575 L585 560 M577 591 L593 574 M789 527 L814 523 M787 545 L814 552.5 M780 559.5 L796 569.5" stroke="#140e06" stroke-width="2.5"/></svg>
<svg class="a" style="left:700px;top:240px" width="160" height="220" viewBox="700 240 160 220"><path d="M715.5 446 L713.5 374.5 L728.5 395 L830 249 C834 244 841 245 842 251 C842.5 253 842 255 841 257 L755.5 412 L780.5 416.5 Z" fill="#e35f99"/></svg>
<div class="a" style="left:1335px;top:57px;width:584px;height:11px;background:#454545"></div>
<svg class="a" style="left:1652px;top:60px" width="9" height="6"><path d="M0.8 0.5 L3 3 L0.8 5.5 M4.8 0.5 L7 3 L4.8 5.5" stroke="#e0e0e0" stroke-width="1.3" fill="none"/></svg>
<svg class="a" style="left:1903px;top:60px" width="9" height="6"><path d="M0.8 0.5 L3 3 L0.8 5.5 M4.8 0.5 L7 3 L4.8 5.5" stroke="#e0e0e0" stroke-width="1.3" fill="none"/></svg>
<div class="a" style="left:1666px;top:68px;width:2px;height:923px;background:#3a3a3a"></div>
<div class="a" style="left:1335px;top:68px;width:331px;height:29px;background:#424242;border-bottom:1px solid #3a3a3a"></div>
<div class="a" style="left:1335px;top:68px;width:62px;height:28px;background:#474747;border-right:1px solid #3c3c3c"></div>
<div class="a" style="left:1398px;top:68px;width:40px;height:29px;background:#535353;border-right:1px solid #3c3c3c"></div>
<div class="t" style="left:1343px;top:77px;font-size:11px;color:#b4b4b4">历史记录</div>
<div class="t" style="left:1406px;top:77px;font-size:11.3px;color:#f0f0f0;-webkit-text-stroke:0.2px #f0f0f0">动作</div>
<svg class="a" style="left:1651px;top:79px" width="11" height="8"><path d="M0 0.5H10M0 2.7H10M0 4.9H10M0 7.1H10" stroke="#cfcfcf" stroke-width="1"/></svg>
<div class="a" style="left:1335px;top:97px;width:331px;height:330px;background:#535353"></div>
<div class="a" style="left:1650px;top:100px;width:16px;height:326px;background:#4a4a4a"></div>
<div class="a" style="left:1335px;top:120px;width:315px;height:1px;background:#474747"></div>
<div class="a" style="left:1335px;top:140px;width:315px;height:1px;background:#474747"></div>
<div class="a" style="left:1335px;top:160px;width:315px;height:1px;background:#474747"></div>
<div class="a" style="left:1335px;top:180px;width:315px;height:1px;background:#474747"></div>
<div class="a" style="left:1335px;top:200px;width:315px;height:1px;background:#474747"></div>
<div class="a" style="left:1335px;top:220px;width:315px;height:1px;background:#474747"></div>
<div class="a" style="left:1335px;top:240px;width:315px;height:1px;background:#474747"></div>
<div class="a" style="left:1335px;top:260px;width:315px;height:1px;background:#474747"></div>
<div class="a" style="left:1482px;top:221px;width:168px;height:19px;background:#6a6a6a"></div>
<div class="a" style="left:1356px;top:100px;width:1px;height:326px;background:#494949"></div>
<svg class="a" style="left:1340px;top:104px" width="12" height="10"><path d="M1 5 L4.5 8.5 L11 1.5" stroke="#e6e6e6" stroke-width="2" fill="none"/></svg>
<svg class="a" style="left:1362px;top:103px" width="12" height="12"><rect x="0.6" y="0.6" width="10.8" height="10.8" stroke="#e0e0e0" stroke-width="1.2" fill="none"/><path d="M0.6 2.8H11.4 M3.5 7H8.5" stroke="#e0e0e0" stroke-width="1.2"/></svg>
<svg class="a" style="left:1383px;top:103px" width="6" height="11"><path d="M1 1 L5 5.5 L1 10" stroke="#cfcfcf" stroke-width="1" fill="none"/></svg>
<svg class="a" style="left:1398px;top:102px" width="16" height="13"><path d="M0.5 2 H6 L7 0.5 H15.5 V12.5 H0.5 Z" fill="#d8d8d8"/></svg>
<div class="t" style="left:1421px;top:104px;font-size:11px;color:#e2e2e2">默认动作</div>
<svg class="a" style="left:1398px;top:122px" width="16" height="4"><path d="M0.5 3 H6 L7 1 H15.5 V4 H0.5 Z" fill="#d0d0d0"/></svg>
<div class="t" style="left:1480px;top:143px;font-size:11px;color:#cfcfcf">用</div>
<div class="a" style="left:1335px;top:426px;width:331px;height:24px;background:#535353;border-top:1px solid #474747"></div>
<div class="a" style="left:1508px;top:433px;width:10px;height:10px;border-radius:50%;background:#e0e0e0"></div>
<svg class="a" style="left:1538px;top:432px" width="11" height="12"><path d="M0.5 0.5 L10.5 6 L0.5 11.5 Z" fill="#e0e0e0"/></svg>
<svg class="a" style="left:1564px;top:432px" width="15" height="12"><path d="M0.5 1.5 H5.5 L6.5 0.5 H14.5 V11.5 H0.5 Z" fill="#e0e0e0"/></svg>
<svg class="a" style="left:1597px;top:432px" width="13" height="13"><rect x="0.6" y="0.6" width="11.8" height="11.8" stroke="#e0e0e0" stroke-width="1.2" fill="none"/><path d="M6.5 3 V10 M3 6.5 H10" stroke="#e0e0e0" stroke-width="1.3"/></svg>
<svg class="a" style="left:1625px;top:431px" width="12" height="14"><path d="M0.5 2.5 H11.5 M4 2.5 V0.8 H8 V2.5" stroke="#e0e0e0" stroke-width="1.1" fill="none"/><path d="M1.8 3.5 H10.2 L9.5 13.3 H2.5 Z" stroke="#e0e0e0" stroke-width="1.2" fill="none"/><path d="M4.5 5 V12 M6 5 V12 M7.5 5 V12" stroke="#e0e0e0" stroke-width="0.9"/></svg>
<div class="a" style="left:1335px;top:450px;width:331px;height:1px;background:#3a3a3a"></div>
<div class="a" style="left:1335px;top:451px;width:331px;height:29px;background:#424242;border-bottom:1px solid #3a3a3a"></div>
<svg class="a" style="left:1651px;top:462px" width="11" height="8"><path d="M0 0.5H10M0 2.7H10M0 4.9H10M0 7.1H10" stroke="#cfcfcf" stroke-width="1"/></svg>
<div class="a" style="left:1335px;top:480px;width:331px;height:486px;background:#535353"></div>
<div class="a" style="left:1371px;top:505px;width:43px;height:11px;background:#474747;border:1px solid #4d4d4d;border-radius:3px"></div>
<div class="a" style="left:1341px;top:524px;width:104px;height:311px;border:1px solid #494949;background:#505050"></div>
<div class="t" style="left:1359px;top:530px;font-size:11px;color:#858585">画笔笔尖形状</div>
<div class="a" style="left:1342px;top:546px;width:102px;height:1px;background:#474747"></div>
<div class="a" style="left:1352px;top:552px;width:11px;height:11px;border:1px solid #484848;border-radius:2px;background:#4d4d4d"></div>
<div class="t" style="left:1372px;top:553px;font-size:11px;color:#858585">形状动态</div>
<svg class="a" style="left:1426px;top:552px" width="11" height="13"><path d="M2.5 6 V4 A3 3 0 0 1 8.5 4 V6" stroke="#9a9a9a" stroke-width="1.3" fill="none"/><rect x="1" y="6" width="9" height="6.5" stroke="#9a9a9a" stroke-width="1.2" fill="none"/><rect x="5" y="8.5" width="1.3" height="1.6" fill="#9a9a9a"/></svg>
<div class="a" style="left:1342px;top:570px;width:102px;height:1px;background:#474747"></div>
<div class="a" style="left:1352px;top:576px;width:11px;height:11px;border:1px solid #484848;border-radius:2px;background:#4d4d4d"></div>
<div class="t" style="left:1372px;top:577px;font-size:11px;color:#858585">散布</div>
<svg class="a" style="left:1426px;top:576px" width="11" height="13"><path d="M2.5 6 V4 A3 3 0 0 1 8.5 4 V6" stroke="#9a9a9a" stroke-width="1.3" fill="none"/><rect x="1" y="6" width="9" height="6.5" stroke="#9a9a9a" stroke-width="1.2" fill="none"/><rect x="5" y="8.5" width="1.3" height="1.6" fill="#9a9a9a"/></svg>
<div class="a" style="left:1342px;top:594px;width:102px;height:1px;background:#474747"></div>
<div class="a" style="left:1352px;top:600px;width:11px;height:11px;border:1px solid #484848;border-radius:2px;background:#4d4d4d"></div>
<div class="t" style="left:1372px;top:601px;font-size:11px;color:#858585">纹理</div>
<svg class="a" style="left:1426px;top:600px" width="11" height="13"><path d="M2.5 6 V4 A3 3 0 0 1 8.5 4 V6" stroke="#9a9a9a" stroke-width="1.3" fill="none"/><rect x="1" y="6" width="9" height="6.5" stroke="#9a9a9a" stroke-width="1.2" fill="none"/><rect x="5" y="8.5" width="1.3" height="1.6" fill="#9a9a9a"/></svg>
<div class="a" style="left:1342px;top:618px;width:102px;height:1px;background:#474747"></div>
<div class="a" style="left:1352px;top:624px;width:11px;height:11px;border:1px solid #484848;border-radius:2px;background:#4d4d4d"></div>
<div class="t" style="left:1372px;top:625px;font-size:11px;color:#858585">双重画笔</div>
<svg class="a" style="left:1426px;top:624px" width="11" height="13"><path d="M2.5 6 V4 A3 3 0 0 1 8.5 4 V6" stroke="#9a9a9a" stroke-width="1.3" fill="none"/><rect x="1" y="6" width="9" height="6.5" stroke="#9a9a9a" stroke-width="1.2" fill="none"/><rect x="5" y="8.5" width="1.3" height="1.6" fill="#9a9a9a"/></svg>
<div class="a" style="left:1342px;top:642px;width:102px;height:1px;background:#474747"></div>
<div class="a" style="left:1352px;top:648px;width:11px;height:11px;border:1px solid #484848;border-radius:2px;background:#4d4d4d"></div>
<div class="t" style="left:1372px;top:649px;font-size:11px;color:#858585">颜色动态</div>
<svg class="a" style="left:1426px;top:648px" width="11" height="13"><path d="M2.5 6 V4 A3 3 0 0 1 8.5 4 V6" stroke="#9a9a9a" stroke-width="1.3" fill="none"/><rect x="1" y="6" width="9" height="6.5" stroke="#9a9a9a" stroke-width="1.2" fill="none"/><rect x="5" y="8.5" width="1.3" height="1.6" fill="#9a9a9a"/></svg>
<div class="a" style="left:1342px;top:666px;width:102px;height:1px;background:#474747"></div>
<div class="a" style="left:1352px;top:672px;width:11px;height:11px;border:1px solid #484848;border-radius:2px;background:#4d4d4d"></div>
<div class="t" style="left:1372px;top:673px;font-size:11px;color:#858585">传递</div>
<svg class="a" style="left:1426px;top:672px" width="11" height="13"><path d="M2.5 6 V4 A3 3 0 0 1 8.5 4 V6" stroke="#9a9a9a" stroke-width="1.3" fill="none"/><rect x="1" y="6" width="9" height="6.5" stroke="#9a9a9a" stroke-width="1.2" fill="none"/><rect x="5" y="8.5" width="1.3" height="1.6" fill="#9a9a9a"/></svg>
<div class="a" style="left:1342px;top:690px;width:102px;height:1px;background:#474747"></div>
<div class="a" style="left:1352px;top:696px;width:11px;height:11px;border:1px solid #484848;border-radius:2px;background:#4d4d4d"></div>
<div class="t" style="left:1372px;top:697px;font-size:11px;color:#858585">画笔笔势</div>
<svg class="a" style="left:1426px;top:696px" width="11" height="13"><path d="M2.5 6 V4 A3 3 0 0 1 8.5 4 V6" stroke="#9a9a9a" stroke-width="1.3" fill="none"/><rect x="1" y="6" width="9" height="6.5" stroke="#9a9a9a" stroke-width="1.2" fill="none"/><rect x="5" y="8.5" width="1.3" height="1.6" fill="#9a9a9a"/></svg>
<div class="a" style="left:1352px;top:720px;width:11px;height:11px;border:1px solid #484848;border-radius:2px;background:#4d4d4d"></div>
<div class="t" style="left:1372px;top:721px;font-size:11px;color:#858585">杂色</div>
<svg class="a" style="left:1426px;top:720px" width="11" height="13"><path d="M2.5 6 V4 A3 3 0 0 1 8.5 4 V6" stroke="#9a9a9a" stroke-width="1.3" fill="none"/><rect x="1" y="6" width="9" height="6.5" stroke="#9a9a9a" stroke-width="1.2" fill="none"/><rect x="5" y="8.5" width="1.3" height="1.6" fill="#9a9a9a"/></svg>
<div class="a" style="left:1352px;top:744px;width:11px;height:11px;border:1px solid #484848;border-radius:2px;background:#4d4d4d"></div>
<div class="t" style="left:1372px;top:745px;font-size:11px;color:#858585">湿边</div>
<svg class="a" style="left:1426px;top:744px" width="11" height="13"><path d="M2.5 6 V4 A3 3 0 0 1 8.5 4 V6" stroke="#9a9a9a" stroke-width="1.3" fill="none"/><rect x="1" y="6" width="9" height="6.5" stroke="#9a9a9a" stroke-width="1.2" fill="none"/><rect x="5" y="8.5" width="1.3" height="1.6" fill="#9a9a9a"/></svg>
<div class="a" style="left:1352px;top:768px;width:11px;height:11px;border:1px solid #484848;border-radius:2px;background:#4d4d4d"></div>
<div class="t" style="left:1372px;top:769px;font-size:11px;color:#858585">建立</div>
<svg class="a" style="left:1426px;top:768px" width="11" height="13"><path d="M2.5 6 V4 A3 3 0 0 1 8.5 4 V6" stroke="#9a9a9a" stroke-width="1.3" fill="none"/><rect x="1" y="6" width="9" height="6.5" stroke="#9a9a9a" stroke-width="1.2" fill="none"/><rect x="5" y="8.5" width="1.3" height="1.6" fill="#9a9a9a"/></svg>
<div class="a" style="left:1352px;top:792px;width:11px;height:11px;border:1px solid #484848;border-radius:2px;background:#4d4d4d"></div>
<div class="t" style="left:1372px;top:793px;font-size:11px;color:#858585">平滑</div>
<svg class="a" style="left:1426px;top:792px" width="11" height="13"><path d="M2.5 6 V4 A3 3 0 0 1 8.5 4 V6" stroke="#9a9a9a" stroke-width="1.3" fill="none"/><rect x="1" y="6" width="9" height="6.5" stroke="#9a9a9a" stroke-width="1.2" fill="none"/><rect x="5" y="8.5" width="1.3" height="1.6" fill="#9a9a9a"/></svg>
<div class="a" style="left:1352px;top:816px;width:11px;height:11px;border:1px solid #484848;border-radius:2px;background:#4d4d4d"></div>
<div class="t" style="left:1372px;top:817px;font-size:11px;color:#858585">保护纹理</div>
<svg class="a" style="left:1426px;top:816px" width="11" height="13"><path d="M2.5 6 V4 A3 3 0 0 1 8.5 4 V6" stroke="#9a9a9a" stroke-width="1.3" fill="none"/><rect x="1" y="6" width="9" height="6.5" stroke="#9a9a9a" stroke-width="1.2" fill="none"/><rect x="5" y="8.5" width="1.3" height="1.6" fill="#9a9a9a"/></svg>
<div class="a" style="left:1454px;top:490px;width:205px;height:113px;background:#4c4c4c;border:1px solid #474747"></div>
<div class="a" style="left:1642px;top:491px;width:16px;height:111px;background:#484848"></div>
<div class="a" style="left:1456px;top:491px;width:31px;height:31px;border-right:1px solid #4a4a4a;border-bottom:1px solid #4a4a4a"></div>
<div class="t" style="left:1456px;width:31px;text-align:center;top:513px;font-size:10.5px;color:#7c7c7c">30</div>
<div class="a" style="left:1488px;top:491px;width:31px;height:31px;border-right:1px solid #4a4a4a;border-bottom:1px solid #4a4a4a"></div>
<div class="t" style="left:1488px;width:31px;text-align:center;top:513px;font-size:10.5px;color:#7c7c7c">223</div>
<div class="a" style="left:1520px;top:491px;width:31px;height:31px;border-right:1px solid #4a4a4a;border-bottom:1px solid #4a4a4a"></div>
<div class="t" style="left:1520px;width:31px;text-align:center;top:513px;font-size:10.5px;color:#7c7c7c">346</div>
<div class="a" style="left:1552px;top:491px;width:31px;height:31px;border-right:1px solid #4a4a4a;border-bottom:1px solid #4a4a4a"></div>
<div class="t" style="left:1552px;width:31px;text-align:center;top:513px;font-size:10.5px;color:#7c7c7c">25</div>
<div class="a" style="left:1584px;top:491px;width:31px;height:31px;border-right:1px solid #4a4a4a;border-bottom:1px solid #4a4a4a"></div>
<div class="t" style="left:1584px;width:31px;text-align:center;top:513px;font-size:10.5px;color:#7c7c7c">60</div>
<div class="a" style="left:1456px;top:523px;width:31px;height:31px;border-right:1px solid #4a4a4a;border-bottom:1px solid #4a4a4a"></div>
<div class="t" style="left:1456px;width:31px;text-align:center;top:545px;font-size:10.5px;color:#7c7c7c">306</div>
<div class="a" style="left:1488px;top:523px;width:31px;height:31px;border-right:1px solid #4a4a4a;border-bottom:1px solid #4a4a4a"></div>
<div class="t" style="left:1488px;width:31px;text-align:center;top:545px;font-size:10.5px;color:#7c7c7c">123</div>
<div class="a" style="left:1520px;top:523px;width:31px;height:31px;border-right:1px solid #4a4a4a;border-bottom:1px solid #4a4a4a"></div>
<div class="t" style="left:1520px;width:31px;text-align:center;top:545px;font-size:10.5px;color:#7c7c7c">8</div>
<div class="a" style="left:1552px;top:523px;width:31px;height:31px;border-right:1px solid #4a4a4a;border-bottom:1px solid #4a4a4a"></div>
<div class="t" style="left:1552px;width:31px;text-align:center;top:545px;font-size:10.5px;color:#7c7c7c">10</div>
<div class="a" style="left:1584px;top:523px;width:31px;height:31px;border-right:1px solid #4a4a4a;border-bottom:1px solid #4a4a4a"></div>
<div class="t" style="left:1584px;width:31px;text-align:center;top:545px;font-size:10.5px;color:#7c7c7c">112</div>
<div class="a" style="left:1456px;top:555px;width:31px;height:31px;border-right:1px solid #4a4a4a;border-bottom:1px solid #4a4a4a"></div>
<div class="t" style="left:1456px;width:31px;text-align:center;top:577px;font-size:10.5px;color:#7c7c7c">50</div>
<div class="a" style="left:1488px;top:555px;width:31px;height:31px;border-right:1px solid #4a4a4a;border-bottom:1px solid #4a4a4a"></div>
<div class="t" style="left:1488px;width:31px;text-align:center;top:577px;font-size:10.5px;color:#7c7c7c">25</div>
<div class="a" style="left:1520px;top:555px;width:31px;height:31px;border-right:1px solid #4a4a4a;border-bottom:1px solid #4a4a4a"></div>
<div class="t" style="left:1520px;width:31px;text-align:center;top:577px;font-size:10.5px;color:#7c7c7c">30</div>
<div class="a" style="left:1552px;top:555px;width:31px;height:31px;border-right:1px solid #4a4a4a;border-bottom:1px solid #4a4a4a"></div>
<div class="t" style="left:1552px;width:31px;text-align:center;top:577px;font-size:10.5px;color:#7c7c7c">50</div>
<div class="a" style="left:1584px;top:555px;width:31px;height:31px;border-right:1px solid #4a4a4a;border-bottom:1px solid #4a4a4a"></div>
<div class="t" style="left:1584px;width:31px;text-align:center;top:577px;font-size:10.5px;color:#7c7c7c">60</div>
<div class="a" style="left:1455px;top:491px;width:187px;height:111px;overflow:hidden"><svg class="a" style="left:-1455px;top:-491px" width="1700" height="610"><g fill="#7c7c7c"><path d="M1489 502.3 H1517 M1512 499 L1517.5 502.3 L1512 505.5 M1523 502.3 H1550 M1545 499 L1550.5 502.3 L1545 505.5" stroke="#7c7c7c" stroke-width="1" fill="none"/><circle cx="1523" cy="502.3" r="1.6" fill="none" stroke="#7c7c7c"/><circle cx="1566.8" cy="504.3" r="1.6"/><circle cx="1575.1" cy="504.1" r="1.1"/><circle cx="1575.2" cy="503.5" r="0.7"/><circle cx="1566.1" cy="502.4" r="0.7"/><circle cx="1560.4" cy="504.8" r="0.8"/><circle cx="1569.8" cy="507.7" r="2.0"/><circle cx="1562.9" cy="499.2" r="2.1"/><circle cx="1577.4" cy="503.6" r="1.0"/><circle cx="1570.6" cy="503.7" r="1.1"/><circle cx="1570.2" cy="498.4" r="1.5"/><circle cx="1564.6" cy="497.8" r="1.4"/><circle cx="1570.8" cy="502.3" r="0.9"/><circle cx="1565.7" cy="496.8" r="1.1"/><circle cx="1562.7" cy="498.7" r="1.0"/><circle cx="1570.8" cy="495.1" r="1.0"/><circle cx="1562.0" cy="498.9" r="1.9"/><circle cx="1567.8" cy="497.2" r="2.1"/><circle cx="1573.3" cy="505.0" r="1.7"/><circle cx="1572.5" cy="506.1" r="0.7"/><circle cx="1564.2" cy="495.4" r="1.5"/><circle cx="1572.5" cy="498.3" r="1.6"/><circle cx="1562.2" cy="498.1" r="1.3"/><circle cx="1573.7" cy="494.9" r="1.3"/><circle cx="1567.2" cy="499.8" r="1.7"/><circle cx="1562.5" cy="495.1" r="1.8"/><circle cx="1567.2" cy="506.4" r="1.6"/><circle cx="1575.2" cy="502.3" r="0.9"/><circle cx="1570.3" cy="502.8" r="1.8"/><circle cx="1571.9" cy="504.4" r="1.2"/><circle cx="1570.5" cy="499.9" r="1.3"/><circle cx="1559.6" cy="499.2" r="1.8"/><circle cx="1572.0" cy="498.3" r="1.2"/><circle cx="1562.6" cy="507.3" r="2.0"/><circle cx="1570.9" cy="504.2" r="0.9"/><circle cx="1569.2" cy="507.0" r="1.5"/><circle cx="1568.4" cy="502.0" r="1.2"/><circle cx="1563.4" cy="505.9" r="2.0"/><circle cx="1565.9" cy="496.2" r="1.5"/><circle cx="1567.5" cy="499.8" r="1.9"/><circle cx="1570.2" cy="494.2" r="1.8"/><circle cx="1563.6" cy="504.7" r="0.8"/><circle cx="1566.8" cy="500.0" r="0.7"/><circle cx="1569.5" cy="504.6" r="1.1"/><circle cx="1568.6" cy="501.5" r="0.8"/><circle cx="1573.3" cy="504.4" r="0.6"/><circle cx="1574.0" cy="497.0" r="0.8"/><circle cx="1568.4" cy="506.2" r="1.1"/><circle cx="1575.1" cy="506.6" r="2.1"/><circle cx="1561.7" cy="502.7" r="0.7"/><circle cx="1573.2" cy="504.3" r="1.0"/><circle cx="1570.4" cy="498.7" r="0.6"/><circle cx="1575.4" cy="499.7" r="0.8"/><circle cx="1566.9" cy="501.1" r="1.4"/><circle cx="1577.7" cy="500.5" r="1.6"/><circle cx="1568.1" cy="506.3" r="0.9"/><circle cx="1600" cy="502" r="8.5" fill="none" stroke="#7c7c7c" stroke-width="1.6" stroke-dasharray="1.5 1"/><circle cx="1600.7" cy="496.9" r="1.4"/><circle cx="1598.4" cy="504.9" r="1.4"/><circle cx="1606.4" cy="501.4" r="1.4"/><circle cx="1602.5" cy="496.5" r="0.8"/><circle cx="1595.9" cy="501.5" r="0.6"/><circle cx="1603.6" cy="502.6" r="0.9"/><circle cx="1597.6" cy="495.6" r="1.0"/><circle cx="1606.4" cy="499.3" r="1.6"/><circle cx="1597.8" cy="504.5" r="0.8"/><circle cx="1601.0" cy="505.0" r="1.2"/><circle cx="1605.2" cy="498.2" r="1.1"/><circle cx="1596.4" cy="496.9" r="0.7"/><circle cx="1596.4" cy="496.3" r="1.4"/><circle cx="1600.0" cy="497.2" r="0.8"/><circle cx="1601.0" cy="498.1" r="1.4"/><circle cx="1604.3" cy="501.2" r="1.0"/><circle cx="1605.6" cy="500.0" r="0.8"/><circle cx="1601.9" cy="503.9" r="1.5"/><circle cx="1600.9" cy="499.5" r="1.4"/><circle cx="1605.6" cy="501.3" r="1.0"/><circle cx="1597.6" cy="501.2" r="0.6"/><circle cx="1605.5" cy="501.0" r="1.1"/><circle cx="1604.2" cy="500.1" r="1.5"/><circle cx="1601.5" cy="499.1" r="0.9"/><circle cx="1599.1" cy="505.3" r="1.2"/><circle cx="1471.7" cy="539.1" r="0.8"/><circle cx="1476.3" cy="530.9" r="1.3"/><circle cx="1465.0" cy="529.6" r="1.3"/><circle cx="1477.2" cy="530.6" r="1.5"/><circle cx="1470.9" cy="533.4" r="1.3"/><circle cx="1472.2" cy="534.1" r="1.9"/><circle cx="1474.7" cy="538.8" r="1.8"/><circle cx="1467.4" cy="531.9" r="1.4"/><circle cx="1464.9" cy="531.0" r="0.8"/><circle cx="1468.1" cy="532.0" r="1.0"/><circle cx="1472.8" cy="527.6" r="1.5"/><circle cx="1472.5" cy="525.5" r="1.3"/><circle cx="1467.4" cy="529.7" r="1.4"/><circle cx="1470.0" cy="528.2" r="1.5"/><circle cx="1463.8" cy="534.7" r="1.7"/><circle cx="1477.9" cy="527.8" r="1.0"/><circle cx="1464.3" cy="530.6" r="1.9"/><circle cx="1473.9" cy="535.8" r="1.3"/><circle cx="1475.7" cy="535.4" r="0.7"/><circle cx="1468.4" cy="527.0" r="2.0"/><circle cx="1476.1" cy="539.5" r="1.7"/><circle cx="1477.0" cy="539.8" r="2.1"/><circle cx="1504" cy="534.3" r="8.3"/><circle cx="1536.6" cy="537.4" r="1.1"/><circle cx="1532.5" cy="534.3" r="1.6"/><circle cx="1537.2" cy="536.0" r="1.2"/><circle cx="1535.2" cy="535.3" r="1.0"/><circle cx="1535.9" cy="533.5" r="1.3"/><circle cx="1535.6" cy="534.2" r="1.0"/><circle cx="1534.2" cy="532.2" r="0.7"/><circle cx="1539.1" cy="533.7" r="1.8"/><ellipse cx="1568.5" cy="534" rx="4" ry="4.6"/><circle cx="1603.7" cy="534.2" r="0.6"/><circle cx="1600.8" cy="528.4" r="0.7"/><circle cx="1592.4" cy="535.1" r="1.4"/><circle cx="1599.8" cy="534.7" r="1.5"/><circle cx="1593.2" cy="529.5" r="0.7"/><circle cx="1607.0" cy="534.1" r="1.0"/><circle cx="1607.8" cy="535.0" r="1.2"/><circle cx="1600.8" cy="530.1" r="1.5"/><circle cx="1607.6" cy="534.6" r="1.1"/><circle cx="1596.4" cy="536.4" r="1.5"/><circle cx="1599.6" cy="534.5" r="1.1"/><circle cx="1600.2" cy="534.3" r="0.8"/><circle cx="1603.8" cy="533.0" r="0.9"/><circle cx="1597.3" cy="537.7" r="0.9"/><circle cx="1596.2" cy="532.0" r="0.9"/><circle cx="1604.5" cy="532.4" r="0.6"/><circle cx="1599.3" cy="526.8" r="0.8"/><circle cx="1591.4" cy="533.1" r="0.7"/><circle cx="1602.5" cy="527.8" r="1.1"/><circle cx="1602.9" cy="528.2" r="1.1"/><circle cx="1596.6" cy="525.6" r="0.9"/><circle cx="1603.7" cy="526.9" r="1.2"/><circle cx="1595.6" cy="534.3" r="0.7"/><circle cx="1601.6" cy="533.4" r="1.3"/><circle cx="1599.9" cy="534.8" r="0.7"/><circle cx="1604.6" cy="526.5" r="1.3"/><circle cx="1599.1" cy="535.4" r="0.9"/><circle cx="1596.5" cy="532.7" r="1.0"/><circle cx="1599.3" cy="538.8" r="1.6"/><circle cx="1595.7" cy="531.0" r="1.6"/><circle cx="1598.0" cy="535.9" r="0.6"/><circle cx="1595.4" cy="535.3" r="1.1"/><circle cx="1601.9" cy="536.7" r="0.6"/><circle cx="1599.8" cy="534.1" r="1.0"/><circle cx="1601.3" cy="532.3" r="0.9"/><circle cx="1600.7" cy="537.3" r="1.1"/><circle cx="1600.0" cy="526.3" r="1.3"/><circle cx="1604.1" cy="529.0" r="0.9"/><circle cx="1603.5" cy="531.7" r="1.3"/><circle cx="1598.8" cy="530.9" r="1.4"/><circle cx="1605.5" cy="528.5" r="1.3"/><circle cx="1601.3" cy="529.6" r="1.1"/><circle cx="1591.8" cy="531.8" r="1.4"/><circle cx="1603.2" cy="527.3" r="1.5"/><circle cx="1596.9" cy="526.7" r="0.8"/><ellipse cx="1472" cy="566" rx="12" ry="8.3"/><path d="M1497 560 C1500 556 1508 556 1511 557 C1513 563 1512 570 1508 574 C1503 576 1497 573 1496 568 Z"/><circle cx="1538.5" cy="566.5" r="1.2"/><circle cx="1541.1" cy="570.2" r="1.5"/><circle cx="1532.2" cy="561.7" r="1.7"/><circle cx="1535.6" cy="566.0" r="1.9"/><circle cx="1535.9" cy="560.7" r="1.5"/><circle cx="1535.0" cy="564.4" r="1.8"/><circle cx="1536.0" cy="568.0" r="1.0"/><circle cx="1535.6" cy="562.6" r="1.8"/><circle cx="1540.9" cy="565.2" r="1.2"/><circle cx="1530.3" cy="566.8" r="1.8"/><circle cx="1531.8" cy="562.0" r="0.7"/><circle cx="1538.1" cy="569.0" r="1.8"/><circle cx="1534.2" cy="571.3" r="0.6"/><circle cx="1539.4" cy="567.4" r="1.7"/><circle cx="1534.0" cy="560.2" r="1.1"/><circle cx="1531.3" cy="565.5" r="1.3"/><circle cx="1540.9" cy="570.8" r="0.9"/><circle cx="1542.7" cy="565.0" r="0.6"/><circle cx="1529.9" cy="567.7" r="2.1"/><circle cx="1532.6" cy="567.2" r="0.9"/><circle cx="1539.0" cy="564.8" r="1.5"/><circle cx="1539.2" cy="570.2" r="2.1"/><circle cx="1540.3" cy="571.0" r="1.4"/><circle cx="1540.4" cy="561.9" r="1.0"/><circle cx="1539.9" cy="562.9" r="0.6"/><circle cx="1540.9" cy="566.1" r="1.3"/><circle cx="1535.2" cy="568.7" r="1.2"/><circle cx="1533.4" cy="572.3" r="0.6"/><circle cx="1536.0" cy="559.1" r="0.8"/><circle cx="1541.3" cy="563.2" r="2.0"/><circle cx="1534.9" cy="570.4" r="1.2"/><circle cx="1541.4" cy="566.0" r="1.2"/><circle cx="1532.7" cy="567.7" r="0.7"/><circle cx="1541.1" cy="570.1" r="1.1"/><circle cx="1539.2" cy="564.5" r="1.0"/><circle cx="1533.0" cy="565.8" r="1.2"/><circle cx="1542.3" cy="564.1" r="1.9"/><circle cx="1531.4" cy="560.7" r="2.1"/><circle cx="1530.3" cy="564.1" r="0.7"/><circle cx="1535.5" cy="561.0" r="1.8"/><circle cx="1564.5" cy="562.8" r="0.7"/><circle cx="1572.3" cy="564.8" r="1.2"/><circle cx="1564.9" cy="569.4" r="1.6"/><circle cx="1574.6" cy="565.4" r="1.5"/><circle cx="1565.7" cy="571.3" r="1.1"/><circle cx="1570.9" cy="568.6" r="0.9"/><circle cx="1575.5" cy="563.1" r="0.9"/><circle cx="1578.5" cy="561.8" r="1.2"/><circle cx="1571.9" cy="568.5" r="0.7"/><circle cx="1566.5" cy="567.9" r="0.9"/><circle cx="1568.0" cy="571.7" r="1.8"/><circle cx="1568.5" cy="561.2" r="1.1"/><circle cx="1561.2" cy="565.3" r="1.0"/><circle cx="1574.3" cy="567.5" r="1.9"/><circle cx="1574.5" cy="569.8" r="1.4"/><circle cx="1572.1" cy="563.4" r="1.0"/><circle cx="1568.6" cy="570.7" r="1.2"/><circle cx="1579.1" cy="564.0" r="1.7"/><circle cx="1570.6" cy="566.2" r="1.5"/><circle cx="1575.0" cy="562.9" r="1.4"/><circle cx="1576.0" cy="566.0" r="1.8"/><circle cx="1573.6" cy="559.8" r="1.9"/><circle cx="1568.5" cy="568.5" r="0.8"/><circle cx="1558.7" cy="565.1" r="1.8"/><circle cx="1566.8" cy="560.1" r="1.6"/><circle cx="1559.9" cy="567.5" r="0.7"/><circle cx="1569.7" cy="562.5" r="1.8"/><circle cx="1564.5" cy="562.7" r="0.8"/><circle cx="1568.4" cy="572.0" r="1.5"/><circle cx="1570.9" cy="567.3" r="1.3"/><circle cx="1562.0" cy="563.7" r="0.9"/><circle cx="1567.5" cy="565.5" r="1.0"/><circle cx="1557.1" cy="567.8" r="1.4"/><circle cx="1574.7" cy="562.6" r="0.9"/><circle cx="1568.7" cy="573.3" r="1.5"/><circle cx="1567.9" cy="567.0" r="1.2"/><circle cx="1564.9" cy="561.7" r="0.9"/><circle cx="1562.8" cy="559.7" r="0.9"/><circle cx="1575.3" cy="566.9" r="1.1"/><circle cx="1566.3" cy="563.0" r="1.6"/><circle cx="1567.9" cy="560.7" r="0.9"/><circle cx="1575.1" cy="565.2" r="1.7"/><circle cx="1569.2" cy="569.5" r="1.6"/><circle cx="1565.2" cy="573.0" r="1.2"/><circle cx="1570.7" cy="569.3" r="1.1"/><circle cx="1562.6" cy="559.7" r="0.8"/><circle cx="1564.2" cy="568.1" r="1.9"/><circle cx="1570.2" cy="567.3" r="0.7"/><circle cx="1559.6" cy="570.4" r="1.7"/><circle cx="1567.2" cy="558.6" r="1.8"/><circle cx="1566.0" cy="568.8" r="1.8"/><circle cx="1568.5" cy="564.7" r="1.5"/><circle cx="1563.2" cy="569.2" r="1.0"/><circle cx="1568.8" cy="566.4" r="1.0"/><circle cx="1561.5" cy="571.9" r="0.8"/><circle cx="1573.8" cy="565.2" r="1.1"/><circle cx="1573.2" cy="559.9" r="1.2"/><circle cx="1576.4" cy="567.6" r="1.1"/><circle cx="1573.1" cy="564.4" r="1.1"/><circle cx="1570.2" cy="565.2" r="1.1"/><circle cx="1572.5" cy="559.9" r="0.7"/><circle cx="1571.4" cy="566.4" r="1.8"/><circle cx="1568.0" cy="572.5" r="1.8"/><circle cx="1565.2" cy="569.3" r="1.8"/><circle cx="1563.9" cy="563.4" r="1.5"/><circle cx="1565.9" cy="569.6" r="0.6"/><circle cx="1568.9" cy="558.8" r="1.4"/><circle cx="1570.3" cy="565.6" r="0.9"/><circle cx="1556.9" cy="567.1" r="1.8"/><circle cx="1564.0" cy="568.5" r="1.2"/><circle cx="1588.4" cy="566.3" r="0.8"/><circle cx="1603.3" cy="559.9" r="1.7"/><circle cx="1601.3" cy="560.2" r="1.0"/><circle cx="1596.9" cy="570.1" r="1.6"/><circle cx="1604.7" cy="567.6" r="1.6"/><circle cx="1600.1" cy="567.9" r="0.6"/><circle cx="1593.5" cy="564.6" r="1.9"/><circle cx="1608.9" cy="561.0" r="0.9"/><circle cx="1603.2" cy="567.2" r="1.2"/><circle cx="1598.0" cy="561.1" r="0.9"/><circle cx="1591.8" cy="568.9" r="1.5"/><circle cx="1599.9" cy="559.1" r="1.5"/><circle cx="1608.0" cy="570.7" r="1.0"/><circle cx="1593.3" cy="564.1" r="1.6"/><circle cx="1601.9" cy="569.5" r="0.9"/><circle cx="1606.4" cy="571.8" r="1.4"/><circle cx="1596.5" cy="570.2" r="1.9"/><circle cx="1594.2" cy="565.8" r="1.7"/><circle cx="1593.2" cy="559.9" r="0.7"/><circle cx="1589.3" cy="567.1" r="1.7"/><circle cx="1602.1" cy="565.2" r="1.0"/><circle cx="1603.8" cy="568.2" r="1.9"/><circle cx="1590.0" cy="562.4" r="1.1"/><circle cx="1605.4" cy="562.3" r="0.9"/><circle cx="1602.0" cy="558.8" r="0.7"/><circle cx="1592.2" cy="562.6" r="0.9"/><circle cx="1596.9" cy="568.1" r="0.9"/><circle cx="1599.7" cy="571.8" r="1.4"/><circle cx="1600.4" cy="566.8" r="1.0"/><circle cx="1597.8" cy="563.1" r="1.0"/><circle cx="1603.1" cy="572.4" r="1.3"/><circle cx="1603.5" cy="566.9" r="1.1"/><circle cx="1590.9" cy="564.1" r="0.7"/><circle cx="1605.2" cy="571.4" r="1.1"/><circle cx="1598.6" cy="570.1" r="1.8"/><circle cx="1596.6" cy="571.2" r="1.1"/><circle cx="1590.3" cy="569.5" r="1.9"/><circle cx="1596.5" cy="568.5" r="1.5"/><circle cx="1600.3" cy="566.6" r="1.8"/><circle cx="1590.4" cy="569.1" r="1.1"/><circle cx="1606.0" cy="562.6" r="0.8"/><circle cx="1608.9" cy="566.5" r="1.4"/><circle cx="1603.0" cy="564.8" r="1.4"/><circle cx="1594.1" cy="569.9" r="0.8"/><circle cx="1598.2" cy="571.3" r="1.8"/><circle cx="1606.5" cy="569.3" r="1.6"/><circle cx="1605.2" cy="565.3" r="0.8"/><circle cx="1611.1" cy="563.4" r="1.2"/><circle cx="1610.9" cy="568.4" r="1.1"/><circle cx="1607.8" cy="562.7" r="1.7"/><circle cx="1605.7" cy="571.6" r="0.9"/><circle cx="1590.9" cy="569.9" r="1.7"/><circle cx="1602.3" cy="569.2" r="1.1"/><circle cx="1592.6" cy="565.5" r="0.8"/><circle cx="1600.2" cy="572.4" r="1.8"/><circle cx="1608.7" cy="567.4" r="1.6"/><circle cx="1610.7" cy="567.6" r="0.8"/><circle cx="1592.8" cy="562.7" r="1.4"/><circle cx="1597.3" cy="570.6" r="1.4"/><circle cx="1591.3" cy="568.7" r="1.2"/><circle cx="1598.3" cy="566.4" r="1.4"/><circle cx="1594.2" cy="566.2" r="1.6"/><circle cx="1601.5" cy="561.0" r="0.8"/><circle cx="1596.1" cy="566.4" r="0.8"/><circle cx="1596.7" cy="567.0" r="1.2"/><circle cx="1597.6" cy="565.9" r="1.4"/><circle cx="1608.9" cy="569.2" r="1.6"/><circle cx="1597.2" cy="565.9" r="1.3"/><circle cx="1591.6" cy="571.1" r="0.8"/><circle cx="1607.5" cy="560.1" r="1.6"/><path d="M1469 602 C1468 592 1470 590 1472 590 C1475 590 1476 594 1476 602 Z"/><circle cx="1505.6" cy="595.0" r="1.8"/><circle cx="1495.2" cy="597.3" r="1.7"/><circle cx="1508.1" cy="600.8" r="1.7"/><circle cx="1508.9" cy="598.2" r="1.5"/><circle cx="1508.6" cy="601.0" r="0.9"/><circle cx="1505.4" cy="595.3" r="1.2"/><circle cx="1507.6" cy="595.9" r="0.9"/><circle cx="1498.9" cy="596.9" r="0.6"/><circle cx="1505.5" cy="598.8" r="1.7"/><circle cx="1500.4" cy="592.7" r="0.8"/><circle cx="1504.7" cy="595.3" r="1.2"/><circle cx="1500.5" cy="594.7" r="1.6"/><circle cx="1497.6" cy="595.7" r="1.7"/><circle cx="1511.1" cy="600.0" r="1.4"/><circle cx="1497.7" cy="599.8" r="0.9"/><circle cx="1510.8" cy="596.8" r="1.0"/><circle cx="1504.5" cy="593.7" r="0.8"/><circle cx="1503.9" cy="595.9" r="1.6"/><circle cx="1503.8" cy="601.0" r="1.8"/><circle cx="1497.7" cy="594.9" r="1.0"/><circle cx="1505.7" cy="597.0" r="0.8"/><circle cx="1499.6" cy="594.8" r="1.2"/><circle cx="1506.6" cy="595.9" r="0.9"/><circle cx="1503.2" cy="596.4" r="0.6"/><circle cx="1502.2" cy="598.3" r="1.0"/><circle cx="1505.1" cy="600.8" r="1.3"/><circle cx="1506.0" cy="600.8" r="1.2"/><circle cx="1509.8" cy="600.6" r="0.9"/><circle cx="1505.6" cy="598.2" r="1.4"/><circle cx="1509.5" cy="593.8" r="1.1"/><circle cx="1535.9" cy="597.6" r="1.1"/><circle cx="1531.1" cy="595.6" r="1.1"/><circle cx="1527.8" cy="599.0" r="1.2"/><circle cx="1536.1" cy="602.7" r="0.6"/><circle cx="1530.4" cy="596.2" r="0.8"/><circle cx="1543.4" cy="598.9" r="0.6"/><circle cx="1527.7" cy="595.2" r="0.7"/><circle cx="1538.2" cy="601.4" r="1.0"/><circle cx="1530.9" cy="592.8" r="0.7"/><circle cx="1534.2" cy="600.1" r="0.6"/><circle cx="1542.1" cy="593.6" r="1.2"/><circle cx="1544.3" cy="597.2" r="1.2"/><circle cx="1528.4" cy="598.1" r="1.0"/><circle cx="1536.4" cy="598.9" r="0.8"/><circle cx="1573.6" cy="597.8" r="1.2"/><circle cx="1564.9" cy="591.8" r="1.2"/><circle cx="1567.3" cy="601.4" r="0.9"/><circle cx="1569.7" cy="592.8" r="0.8"/><circle cx="1561.8" cy="592.4" r="0.8"/><circle cx="1568.9" cy="596.5" r="0.8"/><circle cx="1568.8" cy="602.2" r="1.4"/><circle cx="1567.9" cy="593.6" r="1.3"/><circle cx="1597.2" cy="599.2" r="1.5"/><circle cx="1593.2" cy="594.0" r="1.3"/><circle cx="1608.2" cy="596.5" r="1.4"/><circle cx="1596.4" cy="592.6" r="1.0"/><circle cx="1598.6" cy="593.3" r="0.9"/><circle cx="1602.2" cy="600.8" r="0.7"/><circle cx="1603.9" cy="596.0" r="0.6"/><circle cx="1609.1" cy="600.0" r="0.9"/><circle cx="1601.3" cy="597.7" r="0.6"/><circle cx="1596.6" cy="593.3" r="1.3"/><circle cx="1599.7" cy="595.7" r="1.2"/><circle cx="1592.9" cy="600.4" r="1.4"/><circle cx="1602.4" cy="596.2" r="1.5"/><circle cx="1610.0" cy="594.5" r="0.7"/><circle cx="1601.1" cy="598.6" r="0.6"/><circle cx="1606.2" cy="593.3" r="1.2"/><circle cx="1604.3" cy="593.5" r="0.9"/><circle cx="1603.0" cy="597.9" r="1.4"/><circle cx="1601.9" cy="599.7" r="1.0"/><circle cx="1606.0" cy="597.3" r="0.9"/><circle cx="1598.4" cy="594.0" r="0.9"/><circle cx="1608.3" cy="596.2" r="1.5"/><circle cx="1598.4" cy="596.4" r="1.0"/><circle cx="1590.3" cy="598.7" r="0.9"/><circle cx="1597.5" cy="593.5" r="0.8"/><circle cx="1602.3" cy="595.9" r="1.4"/><circle cx="1600.2" cy="597.2" r="0.8"/><circle cx="1600.9" cy="592.1" r="0.6"/><circle cx="1591.6" cy="597.2" r="1.4"/><circle cx="1603.4" cy="600.2" r="0.9"/><circle cx="1603.0" cy="594.8" r="1.5"/><circle cx="1598.8" cy="599.3" r="1.3"/><circle cx="1596.0" cy="597.0" r="1.2"/><circle cx="1609.3" cy="599.2" r="1.3"/><circle cx="1602.2" cy="593.1" r="1.0"/><circle cx="1593.9" cy="598.8" r="1.5"/><circle cx="1609.7" cy="599.4" r="0.6"/><circle cx="1601.7" cy="599.5" r="1.5"/><circle cx="1592.6" cy="597.0" r="1.5"/><circle cx="1600.8" cy="600.4" r="1.1"/></g></svg></div>
<div class="t" style="left:1455px;top:614px;font-size:11px;color:#858585">大小</div>
<svg class="a" style="left:1565px;top:613px" width="13" height="14"><path d="M3 5.5 A4.5 4.5 0 1 1 6.5 11" stroke="#9a9a9a" stroke-width="1.5" fill="none"/><path d="M0.5 5.5 L3.5 2.5 L4.5 7Z" fill="#9a9a9a"/><path d="M1 13 H12" stroke="#9a9a9a" stroke-width="1"/></svg>
<div class="a" style="left:1589px;top:612px;width:70px;height:16px;background:#4d4d4d;border:1px solid #4a4a4a"></div>
<div class="a" style="left:1459px;top:636px;width:196px;height:3px;background:#5c5c5c;border-radius:1px"></div>
<div class="a" style="left:1454px;top:659px;width:11px;height:11px;border:1px solid #4a4a4a;background:#4f4f4f;border-radius:2px"></div>
<div class="t" style="left:1474px;top:659px;font-size:11px;color:#858585">翻转 X</div>
<div class="a" style="left:1516px;top:659px;width:11px;height:11px;border:1px solid #4a4a4a;background:#4f4f4f;border-radius:2px"></div>
<div class="t" style="left:1536px;top:659px;font-size:11px;color:#858585">翻转 Y</div>
<div class="t" style="left:1474px;top:690px;font-size:11px;color:#858585">角度:</div>
<div class="a" style="left:1506px;top:688px;width:64px;height:17px;background:#4d4d4d;border:1px solid #555"></div>
<div class="t" style="left:1474px;top:716px;font-size:11px;color:#858585">圆度:</div>
<div class="a" style="left:1506px;top:714px;width:64px;height:17px;background:#4d4d4d;border:1px solid #555"></div>
<div class="a" style="left:1588px;top:656px;width:77px;height:77px;border:1px solid #5e5e5e"></div>
<svg class="a" style="left:1588px;top:656px" width="77" height="77"><circle cx="37.5" cy="38.5" r="26" stroke="#d0d0d0" stroke-width="1.2" fill="none"/><path d="M13 31 L62 47 M45 13 L30 64" stroke="#8a8a8a" stroke-width="0.8"/></svg>
<div class="t" style="left:1454px;top:740px;font-size:11px;color:#858585">硬度</div>
<div class="a" style="left:1596px;top:738px;width:63px;height:16px;background:#4d4d4d;border:1px solid #555"></div>
<div class="a" style="left:1459px;top:761px;width:196px;height:3px;background:#5c5c5c;border-radius:1px"></div>
<div class="a" style="left:1454px;top:782px;width:11px;height:11px;border:1px solid #4a4a4a;background:#4f4f4f;border-radius:2px"></div>
<div class="t" style="left:1474px;top:782px;font-size:11px;color:#858585">间距</div>
<div class="a" style="left:1596px;top:780px;width:63px;height:16px;background:#4d4d4d;border:1px solid #555"></div>
<div class="a" style="left:1459px;top:803px;width:196px;height:3px;background:#5c5c5c;border-radius:1px"></div>
<div class="a" style="left:1335px;top:965px;width:331px;height:1px;background:#474747"></div>
<div class="a" style="left:1335px;top:966px;width:331px;height:25px;background:#535353"></div>
<svg class="a" style="left:1626px;top:971px" width="12" height="12"><rect x="0.6" y="0.6" width="10.8" height="10.8" stroke="#a0a0a0" stroke-width="1" fill="none"/><path d="M6 3 V9 M3 6 H9" stroke="#a0a0a0" stroke-width="1"/></svg>
<div class="a" style="left:1668px;top:68px;width:251px;height:29px;background:#424242;border-bottom:1px solid #3a3a3a"></div>
<div class="a" style="left:1669.0px;top:68px;width:40px;height:28px;background:#444444;border-right:1px solid #3c3c3c"></div>
<div class="t" style="left:1678.0px;top:77px;font-size:11px;color:#b4b4b4">属性</div>
<div class="a" style="left:1709.7px;top:68px;width:40px;height:29px;background:#535353;border-right:1px solid #3c3c3c"></div>
<div class="t" style="left:1718.7px;top:77px;font-size:11px;color:#ececec">颜色</div>
<div class="a" style="left:1750.4px;top:68px;width:40px;height:28px;background:#444444;border-right:1px solid #3c3c3c"></div>
<div class="t" style="left:1759.4px;top:77px;font-size:11px;color:#b4b4b4">色板</div>
<div class="a" style="left:1791.1px;top:68px;width:40px;height:28px;background:#444444;border-right:1px solid #3c3c3c"></div>
<div class="t" style="left:1800.1px;top:77px;font-size:11px;color:#b4b4b4">字符</div>
<div class="a" style="left:1831.8px;top:68px;width:40px;height:28px;background:#444444;border-right:1px solid #3c3c3c"></div>
<div class="t" style="left:1840.8px;top:77px;font-size:11px;color:#b4b4b4">段落</div>
<svg class="a" style="left:1903px;top:79px" width="11" height="8"><path d="M0 0.5H10M0 2.7H10M0 4.9H10M0 7.1H10" stroke="#cfcfcf" stroke-width="1"/></svg>
<div class="a" style="left:1668px;top:97px;width:251px;height:429px;background:#535353"></div>
<div class="a" style="left:1688px;top:117px;width:20px;height:20px;background:#fff;border:1px solid #3a3a3a"></div>
<div class="a" style="left:1677px;top:106px;width:22px;height:22px;background:#000;border:1px solid #8a8a8a;box-shadow:inset 0 0 0 1px #3a3a3a, inset 0 0 0 2px #fff"></div>
<div class="t" style="left:1714px;top:116px;font-size:11px;color:#cfcfcf">H</div>
<div class="t" style="left:1714px;top:138px;font-size:11px;color:#cfcfcf">S</div>
<div class="t" style="left:1714px;top:160px;font-size:11px;color:#cfcfcf">B</div>
<div class="a" style="left:1729px;top:111px;width:107px;height:6px;background:linear-gradient(to right,#f00,#ff0 16.7%,#0f0 33.3%,#0ff 50%,#00f 66.7%,#f0f 83.3%,#f00)"></div>
<div class="a" style="left:1729px;top:133px;width:107px;height:6px;background:#000"></div>
<div class="a" style="left:1729px;top:155px;width:107px;height:6px;background:linear-gradient(to right,#000,#fff)"></div>
<svg class="a" style="left:1724px;top:119px" width="13" height="10"><path d="M6.5 1 L11.5 6 V8.5 A1 1 0 0 1 10.5 9.5 H2.5 A1 1 0 0 1 1.5 8.5 V6 Z" fill="#f0f0f0" stroke="#2c2c2c" stroke-width="1"/></svg>
<svg class="a" style="left:1724px;top:141px" width="13" height="10"><path d="M6.5 1 L11.5 6 V8.5 A1 1 0 0 1 10.5 9.5 H2.5 A1 1 0 0 1 1.5 8.5 V6 Z" fill="#f0f0f0" stroke="#2c2c2c" stroke-width="1"/></svg>
<svg class="a" style="left:1724px;top:163px" width="13" height="10"><path d="M6.5 1 L11.5 6 V8.5 A1 1 0 0 1 10.5 9.5 H2.5 A1 1 0 0 1 1.5 8.5 V6 Z" fill="#f0f0f0" stroke="#2c2c2c" stroke-width="1"/></svg>
<div class="a" style="left:1842px;top:112px;width:41px;height:17px;background:#474747;border:1px solid #5a5a5a"></div>
<div class="t" style="left:1846px;top:115px;font-size:12px;color:#e6e6e6">0</div>
<div class="a" style="left:1842px;top:134px;width:41px;height:17px;background:#474747;border:1px solid #5a5a5a"></div>
<div class="t" style="left:1846px;top:137px;font-size:12px;color:#e6e6e6">0</div>
<div class="a" style="left:1842px;top:156px;width:41px;height:17px;background:#474747;border:1px solid #5a5a5a"></div>
<div class="t" style="left:1846px;top:159px;font-size:12px;color:#e6e6e6">0</div>
<div class="t" style="left:1886px;top:115px;font-size:11px;color:#d0d0d0">°</div>
<div class="t" style="left:1884px;top:137px;font-size:12px;color:#d0d0d0">%</div>
<div class="t" style="left:1884px;top:159px;font-size:12px;color:#d0d0d0">%</div>
<div class="a" style="left:1682px;top:190px;width:224px;height:224px;border-radius:50%;background:conic-gradient(hsl(90,100%,50%) 0deg,hsl(75,100%,50%) 15deg,hsl(60,100%,50%) 30deg,hsl(45,100%,50%) 45deg,hsl(30,100%,50%) 60deg,hsl(15,100%,50%) 75deg,hsl(0,100%,50%) 90deg,hsl(345,100%,50%) 105deg,hsl(330,100%,50%) 120deg,hsl(315,100%,50%) 135deg,hsl(300,100%,50%) 150deg,hsl(285,100%,50%) 165deg,hsl(270,100%,50%) 180deg,hsl(255,100%,50%) 195deg,hsl(240,100%,50%) 210deg,hsl(225,100%,50%) 225deg,hsl(210,100%,50%) 240deg,hsl(195,100%,50%) 255deg,hsl(180,100%,50%) 270deg,hsl(165,100%,50%) 285deg,hsl(150,100%,50%) 300deg,hsl(135,100%,50%) 315deg,hsl(120,100%,50%) 330deg,hsl(105,100%,50%) 345deg,hsl(90,100%,50%) 360deg);-webkit-mask:radial-gradient(circle,transparent 91.5px,#000 92.5px,#000 111px,transparent 112px);mask:radial-gradient(circle,transparent 91.5px,#000 92.5px,#000 111px,transparent 112px)"></div>
<svg class="a" style="left:1740px;top:215px" width="150" height="175" viewBox="1740 215 150 175"><defs><linearGradient id="gr" gradientUnits="userSpaceOnUse" x1="1748.5" y1="302" x2="1884.5" y2="302"><stop offset="0" stop-color="#000"/><stop offset="1" stop-color="#f00"/></linearGradient><linearGradient id="gw" gradientUnits="userSpaceOnUse" x1="1748.5" y1="223" x2="1817.1" y2="341.2"><stop offset="0" stop-color="#fff"/><stop offset="1" stop-color="#000"/></linearGradient></defs><g style="isolation:isolate"><path d="M1884.5 302 L1748.5 223 L1748.5 381 Z" fill="url(#gr)"/><path d="M1884.5 302 L1748.5 223 L1748.5 381 Z" fill="url(#gw)" class="pl"/></g><linearGradient id="ge" gradientUnits="userSpaceOnUse" x1="0" y1="223" x2="0" y2="381"><stop offset="0" stop-color="#fff"/><stop offset="1" stop-color="#000"/></linearGradient><path d="M1749 224 V380" stroke="url(#ge)" stroke-width="1"/></svg>
<svg class="a" style="left:1885px;top:292px" width="22" height="22"><circle cx="11.5" cy="10" r="5.5" stroke="#fff" stroke-width="1.3" fill="none"/></svg>
<svg class="a" style="left:1737px;top:370px" width="22" height="22"><circle cx="11" cy="11" r="5.5" stroke="#e8e8e8" stroke-width="1.3" fill="none"/></svg>
<svg class="a" style="left:1887px;top:496px" width="12" height="12"><rect x="0.6" y="0.6" width="10.8" height="10.8" stroke="#d8d8d8" stroke-width="1.1" fill="none"/><path d="M6 3 V9 M3 6 H9" stroke="#d8d8d8" stroke-width="1.1"/></svg>
<div class="a" style="left:1668px;top:526px;width:251px;height:5px;background:#3c3c3c"></div>
<div class="a" style="left:1668px;top:531px;width:251px;height:28px;background:#424242;border-bottom:1px solid #3a3a3a"></div>
<div class="a" style="left:1669.0px;top:531px;width:36px;height:27px;background:#444444;border-right:1px solid #3c3c3c"></div>
<div class="t" style="left:1678.0px;top:540px;font-size:11px;color:#b4b4b4">3D</div>
<div class="a" style="left:1706.0px;top:531px;width:40px;height:28px;background:#535353;border-right:1px solid #3c3c3c"></div>
<div class="t" style="left:1715.0px;top:540px;font-size:11px;color:#ececec">图层</div>
<div class="a" style="left:1747.0px;top:531px;width:40px;height:27px;background:#444444;border-right:1px solid #3c3c3c"></div>
<div class="t" style="left:1756.0px;top:540px;font-size:11px;color:#b4b4b4">通道</div>
<svg class="a" style="left:1903px;top:541px" width="11" height="8"><path d="M0 0.5H10M0 2.7H10M0 4.9H10M0 7.1H10" stroke="#cfcfcf" stroke-width="1"/></svg>
<div class="a" style="left:1668px;top:559px;width:251px;height:407px;background:#535353"></div>
<div class="a" style="left:1673px;top:568px;width:75px;height:18px;background:#474747;border:1px solid #4e4e4e;border-radius:2px"></div>
<svg class="a" style="left:1680px;top:571px" width="11" height="11"><circle cx="4.5" cy="4.5" r="3.3" stroke="#e6e6e6" stroke-width="1.6" fill="none"/><path d="M7 7 L10 10" stroke="#e6e6e6" stroke-width="1.8"/></svg>
<div class="t" style="left:1693px;top:571px;font-size:12px;color:#e6e6e6">类型</div>
<svg class="a" style="left:1737px;top:575px" width="8" height="5"><path d="M0.5 0.5 L4 4 L7.5 0.5" stroke="#cfcfcf" stroke-width="1.1" fill="none"/></svg>
<svg class="a" style="left:1763px;top:571px" width="14" height="12"><rect x="0.6" y="0.6" width="12.8" height="10.8" stroke="#dadada" stroke-width="1.2" fill="none"/><path d="M2.5 9 L5 5.5 L7 7.5 L9 4.5 L11.5 9 Z" fill="#dadada"/></svg>
<svg class="a" style="left:1788px;top:571px" width="13" height="13"><circle cx="6.5" cy="6.5" r="5.5" stroke="#dadada" stroke-width="1.2" fill="none"/><path d="M10.4 2.6 A5.5 5.5 0 0 1 2.6 10.4 Z" fill="#dadada"/></svg>
<svg class="a" style="left:1812px;top:571px" width="13" height="12"><path d="M1 1 H12 V3.5 H11 L10.5 2 H7.5 V10.5 H9 V11.5 H4 V10.5 H5.5 V2 H2.5 L2 3.5 H1 Z" fill="#dadada"/></svg>
<svg class="a" style="left:1836px;top:571px" width="13" height="13"><rect x="2" y="2" width="9" height="9" stroke="#dadada" stroke-width="1.1" fill="none"/><rect x="0.5" y="0.5" width="3" height="3" fill="#535353" stroke="#dadada"/><rect x="9.5" y="0.5" width="3" height="3" fill="#535353" stroke="#dadada"/><rect x="0.5" y="9.5" width="3" height="3" fill="#535353" stroke="#dadada"/><rect x="9.5" y="9.5" width="3" height="3" fill="#535353" stroke="#dadada"/></svg>
<svg class="a" style="left:1861px;top:570px" width="12" height="14"><path d="M3.5 0.8 H8 L11 3.8 V11 H3.5 Z" stroke="#dadada" stroke-width="1.1" fill="none"/><rect x="0.5" y="7" width="6" height="6.5" fill="#dadada"/></svg>
<div class="a" style="left:1886px;top:571px;width:11px;height:17px;border-radius:6px;background:#474747;border:1px solid #3e3e3e"></div>
<div class="a" style="left:1886px;top:569px;width:11px;height:11px;border-radius:50%;background:#e6e6e6"></div>
<div class="a" style="left:1668px;top:592px;width:251px;height:1px;background:#474747"></div>
<div class="a" style="left:1673px;top:597px;width:112px;height:19px;background:#474747;border:1px solid #4e4e4e;border-radius:2px"></div>
<div class="t" style="left:1680px;top:601px;font-size:12px;color:#e6e6e6">正常</div>
<svg class="a" style="left:1774px;top:604px" width="8" height="5"><path d="M0.5 0.5 L4 4 L7.5 0.5" stroke="#cfcfcf" stroke-width="1.1" fill="none"/></svg>
<div class="t" style="left:1789px;top:600px;font-size:12px;color:#d6d6d6">不透明度:</div>
<div class="a" style="left:1841px;top:597px;width:55px;height:19px;background:#474747;border:1px solid #4e4e4e;border-radius:2px"></div>
<div class="a" style="left:1880px;top:598px;width:1px;height:17px;background:#3c3c3c"></div>
<div class="t" style="left:1843px;top:601px;font-size:12px;color:#e6e6e6">100%</div>
<svg class="a" style="left:1884px;top:604px" width="8" height="5"><path d="M0.5 0.5 L4 4 L7.5 0.5" stroke="#cfcfcf" stroke-width="1.1" fill="none"/></svg>
<div class="a" style="left:1668px;top:620px;width:251px;height:1px;background:#474747"></div>
<div class="t" style="left:1674px;top:629px;font-size:12px;color:#d6d6d6">锁定:</div>
<svg class="a" style="left:1706px;top:629px" width="11" height="11"><rect x="0.5" y="0.5" width="10" height="10" fill="none" stroke="#dadada"/><rect x="0.5" y="0.5" width="3.3" height="3.3" fill="#dadada"/><rect x="7.2" y="0.5" width="3.3" height="3.3" fill="#dadada"/><rect x="3.8" y="3.8" width="3.3" height="3.3" fill="#dadada"/><rect x="0.5" y="7.2" width="3.3" height="3.3" fill="#dadada"/><rect x="7.2" y="7.2" width="3.3" height="3.3" fill="#dadada"/></svg>
<svg class="a" style="left:1727px;top:628px" width="14" height="14"><path d="M6 9 L13 1" stroke="#dadada" stroke-width="1.8" stroke-linecap="round"/><path d="M5.5 8 C3 8 3 11 1 13 C4 13 7 12 7 9.5 Z" fill="#dadada"/></svg>
<svg class="a" style="left:1748px;top:628px" width="14" height="14"><path d="M7 1 V13 M1 7 H13" stroke="#dadada" stroke-width="1.3"/><path d="M7 0 L5 2.5 H9Z M7 14 L5 11.5 H9Z M0 7 L2.5 5 V9Z M14 7 L11.5 5 V9Z" fill="#dadada"/></svg>
<svg class="a" style="left:1771px;top:628px" width="15" height="14"><path d="M3 0 V11 H14 M0 3 H11 V14" stroke="#dadada" stroke-width="1.1" fill="none" stroke-dasharray="2 1"/></svg>
<svg class="a" style="left:1794px;top:628px" width="11" height="13"><path d="M2.5 6 V4 A3 3 0 0 1 8.5 4 V6" stroke="#dadada" stroke-width="1.3" fill="none"/><rect x="1" y="6" width="9" height="6.5" stroke="#dadada" stroke-width="1.2" fill="none"/><rect x="5" y="8.5" width="1.3" height="1.6" fill="#dadada"/></svg>
<div class="t" style="left:1812px;top:629px;font-size:12px;color:#d6d6d6">填充:</div>
<div class="a" style="left:1841px;top:626px;width:55px;height:18px;background:#474747;border:1px solid #4e4e4e;border-radius:2px"></div>
<div class="a" style="left:1880px;top:627px;width:1px;height:16px;background:#3c3c3c"></div>
<div class="t" style="left:1843px;top:630px;font-size:12px;color:#e6e6e6">100%</div>
<svg class="a" style="left:1884px;top:633px" width="8" height="5"><path d="M0.5 0.5 L4 4 L7.5 0.5" stroke="#cfcfcf" stroke-width="1.1" fill="none"/></svg>
<div class="a" style="left:1668px;top:650px;width:251px;height:1px;background:#474747"></div>
<div class="a" style="left:1700px;top:652px;width:204px;height:30px;background:#686868"></div>
<div class="a" style="left:1669px;top:652px;width:31px;height:30px;background:#565656"></div>
<div class="a" style="left:1669px;top:683px;width:235px;height:31px;background:#555555"></div>
<div class="a" style="left:1669px;top:682px;width:235px;height:1px;background:#474747"></div>
<div class="a" style="left:1669px;top:714px;width:235px;height:1px;background:#474747"></div>
<div class="a" style="left:1699px;top:652px;width:1px;height:62px;background:#474747"></div>
<div class="a" style="left:1904px;top:651px;width:15px;height:315px;background:#4f4f4f"></div>
<svg class="a" style="left:1677px;top:663px" width="15" height="11"><path d="M0.8 5.5 C3 1.5 5 0.8 7.5 0.8 C10 0.8 12 1.5 14.2 5.5 C12 9.5 10 10.2 7.5 10.2 C5 10.2 3 9.5 0.8 5.5 Z" fill="#e6e6e6"/><circle cx="7.5" cy="5.5" r="2.9" fill="#3e3e3e"/><circle cx="8.3" cy="4.6" r="0.8" fill="#e6e6e6"/></svg>
<svg class="a" style="left:1677px;top:694px" width="15" height="11"><path d="M0.8 5.5 C3 1.5 5 0.8 7.5 0.8 C10 0.8 12 1.5 14.2 5.5 C12 9.5 10 10.2 7.5 10.2 C5 10.2 3 9.5 0.8 5.5 Z" fill="#e6e6e6"/><circle cx="7.5" cy="5.5" r="2.9" fill="#3e3e3e"/><circle cx="8.3" cy="4.6" r="0.8" fill="#e6e6e6"/></svg>
<svg class="a" style="left:1700px;top:654px" width="38" height="28"><path d="M1 8 V1 H12 M26 1 H37 V8 M37 19 V27 H26 M12 27 H1 V19" stroke="#f6f6f6" stroke-width="1.3" fill="none"/></svg>
<div class="a" style="left:1703px;top:657px;width:32px;height:23px;border:1px solid #2a2a2a;background:#fff;overflow:hidden"></div>
<svg class="a" style="left:1704px;top:658px" width="30" height="21" viewBox="417 367 580 410"><rect x="417" y="367" width="580" height="410" fill="#fff"/><path d="M756 585 C790 585 815 584 828 566 C836 555 838 540 839 522 C840 505 845 496 864 495.5 C872 495.5 878 496.5 881 498" stroke="#140e06" stroke-width="20.5" fill="none" stroke-linecap="round"/><path d="M756 585 C790 585 815 584 828 566 C836 555 838 540 839 522 C840 505 845 496 864 495.5 C872 495.5 878 496.5 881 498" stroke="#f1c86c" stroke-width="15.5" fill="none"/><path d="M756 585 C790 585 815 584 828 566 C836 555 838 540 839 522 C840 505 845 496 864 495.5 C872 495.5 878 496.5 881 498" stroke="#3b2b0e" stroke-width="15.5" fill="none" stroke-dasharray="0 33 36 31.6 34.9 29.1 40" stroke-linecap="butt"/><path d="M878 488 C886 489 891 492 891 497 C891 501 889 505 887 507 L876 506 Z" fill="#3b2b0e" stroke="#140e06" stroke-width="2.4" stroke-linejoin="round"/><path d="M872 489.5 L880 490 L881 505 L872 505 Z" fill="#3b2b0e"/><path d="M789.9 593.0L788.1 575.1M828.2 579.0L816.4 565.4M845.4 546.3L827.7 542.9M849.5 512.7L832.2 507.5M863.8 504.5L863.1 486.5" stroke="#140e06" stroke-width="2.2"/><path d="M745 572 L761 572 L778.5 651.5 L755 656 Z" fill="#f1c86c" stroke="#140e06" stroke-width="2.7" stroke-linejoin="round"/><path d="M750 600 L768 596 L774 628.5 L753.5 631 Z M755 572 L768 572 L764 581 L752 583 Z" fill="#3b2b0e" stroke="#140e06" stroke-width="2" stroke-linejoin="round"/><path d="M619 572 L602 696 L654 694 L661 654 L700 655 L705 692 L754 688 L747 572 Z" fill="#f1c86c" stroke="#140e06" stroke-width="2.7" stroke-linejoin="round"/><path d="M604 684 L653 683 L654 692 L603 694 Z M706 681 L753 678 L754 686 L706 690 Z" fill="#e9b35e"/><path d="M620 586 C660 592 720 590 748 582 L748 578 C720 586 660 588 620 580 Z" fill="#eab55c"/><path d="M614 590 L640.5 609 L610 624 Z M610 627 L632 641 L607 658 Z M748 586 L717 603 L749.5 615 Z M750 618 L722 637 L752 649 Z" fill="#3b2b0e" stroke="#140e06" stroke-width="2.2" stroke-linejoin="round"/><path d="M600 446 A26.5 26.5 0 1 1 636 413 C660 407 690 405.5 712 405.5 C725 405.5 733 404 738 400 A21 21 0 1 1 757 431 C775 455 789 495 789 530 C790 555 775 572 745 580 C720 585 700 585.5 683 585.5 C650 585 620 582 600 572 C585 562 579 545 580.5 520 C582 490 590 462 600 446 Z" fill="#f1c86c" stroke="#140e06" stroke-width="2.7" stroke-linejoin="round"/><circle cx="611.5" cy="421" r="14.5" fill="#eba733" stroke="#140e06" stroke-width="2.4"/><circle cx="760" cy="410" r="11" fill="#eba733" stroke="#140e06" stroke-width="2.4"/><path d="M786 505 C790 540 782 565 745 578 C725 583 705 584 690 584 C720 581 750 572 770 552 C780 538 784 520 786 505 Z" fill="#e8b35e"/><path d="M665.5 407.5 L694 406 L707 538 L660 538 Z" fill="#eec22c" stroke="#140e06" stroke-width="2.4" stroke-linejoin="round"/><defs><clipPath id="hc2"><path d="M600 446 A26.5 26.5 0 1 1 636 413 C660 407 690 405.5 712 405.5 C725 405.5 733 404 738 400 A21 21 0 1 1 757 431 C775 455 789 495 789 530 C790 555 775 572 745 580 C720 585 700 585.5 683 585.5 C650 585 620 582 600 572 C585 562 579 545 580.5 520 C582 490 590 462 600 446 Z"/></clipPath></defs><g clip-path="url(#hc2)"><path d="M598 446 L624.3 462 L586 476 Z M581 489.5 L605.8 503.3 L576 520 Z M576 533 L609 540.2 L581 562 Z M757 432 L736.4 454.5 L771 460 Z M776 466 L758.6 492 L787 495 Z M792 510 L751.5 521 L794 543 Z" fill="#3b2b0e" stroke="#140e06" stroke-width="2.2" stroke-linejoin="round"/></g><path d="M600 446 A26.5 26.5 0 1 1 636 413 C660 407 690 405.5 712 405.5 C725 405.5 733 404 738 400 A21 21 0 1 1 757 431 C775 455 789 495 789 530 C790 555 775 572 745 580 C720 585 700 585.5 683 585.5 C650 585 620 582 600 572 C585 562 579 545 580.5 520 C582 490 590 462 600 446 Z" fill="none" stroke="#140e06" stroke-width="2.7" stroke-linejoin="round"/><circle cx="611.5" cy="421" r="14.5" fill="#eba733" stroke="#140e06" stroke-width="2.4"/><circle cx="760" cy="410" r="11" fill="#eba733" stroke="#140e06" stroke-width="2.4"/><circle cx="632" cy="505" r="17" fill="#3b2b0e" stroke="#140e06" stroke-width="2.4"/><circle cx="637.5" cy="498.5" r="7" fill="#fff"/><circle cx="735.5" cy="500" r="17" fill="#3b2b0e" stroke="#140e06" stroke-width="2.4"/><circle cx="740" cy="494" r="7" fill="#fff"/><path d="M627 579 C620 570 622 548 642 540 C660 535 672 545 683 561 C693 545 705 536 720 539 C740 543 747 562 741 577 C725 583 705 585 683 585 C660 585 640 583 627 579 Z" fill="#fff" stroke="#140e06" stroke-width="2.7" stroke-linejoin="round"/><path d="M683 561 L683.5 585" stroke="#140e06" stroke-width="2.4"/><path d="M700 582 C718 581 733 578 740 572 L739 577 C725 582 712 583.5 700 583.5 Z" fill="#efe2f0"/><path d="M659 539 C672 534 693 533 707 537 L683 562 Z" fill="#eba733" stroke="#140e06" stroke-width="2.4" stroke-linejoin="round"/><path d="M553 541.5 L581 542 M562 575 L585 560 M577 591 L593 574 M789 527 L814 523 M787 545 L814 552.5 M780 559.5 L796 569.5" stroke="#140e06" stroke-width="2.5"/></svg>
<div class="t" style="left:1743px;top:662px;font-size:12px;color:#f0f0f0">图层 1</div>
<div class="a" style="left:1703px;top:688px;width:32px;height:22px;background:#efefef;border:1px solid #2a2a2a"></div>
<div class="t" style="left:1743px;top:693px;font-size:12px;color:#ececec">背景</div>
<svg class="a" style="left:1876px;top:693px" width="11" height="13"><path d="M2.5 6 V4 A3 3 0 0 1 8.5 4 V6" stroke="#d6d6d6" stroke-width="1.3" fill="none"/><rect x="1" y="6" width="9" height="6.5" stroke="#d6d6d6" stroke-width="1.2" fill="none"/><rect x="5" y="8.5" width="1.3" height="1.6" fill="#d6d6d6"/></svg>
<div class="a" style="left:1668px;top:965px;width:251px;height:1px;background:#474747"></div>
<div class="a" style="left:1668px;top:966px;width:251px;height:25px;background:#535353"></div>
<div class="a" style="left:1818px;top:966px;width:26px;height:25px;background:#474747"></div>
<svg class="a" style="left:1716px;top:973px" width="15" height="9"><path d="M5 1 H3.5 A3.5 3.5 0 0 0 3.5 8 H5 M10 1 H11.5 A3.5 3.5 0 0 1 11.5 8 H10 M4.5 4.5 H10.5" stroke="#b0b0b0" stroke-width="1.2" fill="none"/></svg>
<div class="t" style="left:1745px;top:970px;font-size:13px;font-style:italic;color:#e0e0e0;font-family:'Liberation Serif',serif">fx</div>
<svg class="a" style="left:1770px;top:971px" width="14" height="11"><rect x="0" y="0" width="14" height="11" fill="#e0e0e0"/><circle cx="7" cy="5.5" r="3.2" fill="#535353"/></svg>
<svg class="a" style="left:1799px;top:971px" width="13" height="13"><circle cx="6.5" cy="6.5" r="5.5" stroke="#e0e0e0" stroke-width="1.2" fill="none"/><path d="M10.4 2.6 A5.5 5.5 0 0 1 2.6 10.4 Z" fill="#e0e0e0"/></svg>
<svg class="a" style="left:1824px;top:971px" width="15" height="12"><path d="M0.5 1.5 H5.5 L6.5 0.5 H14.5 V11.5 H0.5 Z" fill="#e0e0e0"/></svg>
<svg class="a" style="left:1853px;top:971px" width="13" height="13"><rect x="0.6" y="0.6" width="11.8" height="11.8" stroke="#e0e0e0" stroke-width="1.2" fill="none"/><path d="M6.5 3 V10 M3 6.5 H10" stroke="#e0e0e0" stroke-width="1.3"/></svg>
<svg class="a" style="left:1880px;top:971px" width="12" height="14"><path d="M0.5 2.5 H11.5 M4 2.5 V0.8 H8 V2.5" stroke="#e0e0e0" stroke-width="1.1" fill="none"/><path d="M1.8 3.5 H10.2 L9.5 13.3 H2.5 Z" stroke="#e0e0e0" stroke-width="1.2" fill="none"/><path d="M4.5 5 V12 M6 5 V12 M7.5 5 V12" stroke="#e0e0e0" stroke-width="0.9"/></svg>
<div class="a" style="left:968px;top:125px;width:520px;height:384px;border-radius:8px;background:#535353;box-shadow:0 0 0 1px rgba(0,0,0,0.3),0 10px 36px rgba(0,0,0,0.22);overflow:hidden"><div class="a" style="left:0;top:0;width:520px;height:28px;background:#dcdcdc;border-bottom:1px solid #9a9a9a"></div></div>
<div class="t" style="left:1175px;top:131px;font-size:13px;font-weight:bold;color:#3a3a3a">拾色器（前景色）</div>
<div class="a" style="left:978px;top:186px;width:256px;height:256px;background:linear-gradient(to top,#000,rgba(0,0,0,0)),linear-gradient(to right,#fff,#f00)"></div>
<div class="a" style="left:978px;top:186px;width:256px;height:256px;overflow:hidden"><div class="a" style="left:-5px;top:250px;width:11px;height:11px;border-radius:50%;border:1px solid #e0e0e0"></div></div>
<div class="a" style="left:1246px;top:186px;width:19px;height:256px;background:linear-gradient(to bottom,#f00,#f0f 16.67%,#00f 33.33%,#0ff 50%,#0f0 66.67%,#ff0 83.33%,#f00)"></div>
<svg class="a" style="left:1236px;top:436px" width="8" height="10"><path d="M0.5 0.5 V9.5 L7.5 5 Z" fill="#f0f0f0" stroke="#2a2a2a" stroke-width="0.8"/></svg>
<svg class="a" style="left:1267px;top:436px" width="8" height="10"><path d="M7.5 0.5 V9.5 L0.5 5 Z" fill="#f0f0f0" stroke="#2a2a2a" stroke-width="0.8"/></svg>
<div class="t" style="left:1295px;top:188px;font-size:12px;color:#e0e0e0">新的</div>
<div class="a" style="left:1277px;top:203px;width:61px;height:69px;background:#000;border:1px solid #3a3a3a"></div>
<div class="t" style="left:1295px;top:276px;font-size:12px;color:#e0e0e0">当前</div>
<div class="a" style="left:1386px;top:164px;width:92px;height:27px;border-radius:14px;border:1.6px solid #d6d6d6;background:#565656"></div>
<div class="t" style="left:1386px;width:92px;text-align:center;top:171px;font-size:12px;color:#ececec">确定</div>
<div class="a" style="left:1386px;top:199px;width:92px;height:27px;border-radius:14px;border:1px solid #8c8c8c;background:#565656"></div>
<div class="t" style="left:1386px;width:92px;text-align:center;top:206px;font-size:12px;color:#ececec">取消</div>
<div class="a" style="left:1386px;top:242px;width:92px;height:27px;border-radius:14px;border:1px solid #8c8c8c;background:#565656"></div>
<div class="t" style="left:1386px;width:92px;text-align:center;top:249px;font-size:12px;color:#ececec">添加到色板</div>
<div class="a" style="left:1386px;top:285px;width:92px;height:27px;border-radius:14px;border:1px solid #8c8c8c;background:#565656"></div>
<div class="t" style="left:1386px;width:92px;text-align:center;top:292px;font-size:12px;color:#ececec">颜色库</div>
<svg class="a" style="left:1277px;top:331.1px" width="15" height="15"><circle cx="7.5" cy="7.5" r="6.3" fill="#dedede"/><circle cx="7.5" cy="7.5" r="2.2" fill="#2e2e2e"/></svg>
<div class="t" style="left:1299.5px;top:332.6px;font-size:12.5px;color:#e6e6e6;-webkit-text-stroke:0.3px #e6e6e6">H:</div>
<div class="a" style="left:1324px;top:329.1px;width:34px;height:19px;background:#434343;border:1px solid #5e5e5e"></div>
<div class="t" style="left:1327px;top:332.6px;font-size:12.5px;color:#ececec;-webkit-text-stroke:0.25px #ececec">0</div>
<svg class="a" style="left:1277px;top:354.9px" width="15" height="15"><circle cx="7.5" cy="7.5" r="5.9" fill="#4c4c4c" stroke="#7a7a7a" stroke-width="0.9"/></svg>
<div class="t" style="left:1299.5px;top:356.4px;font-size:12.5px;color:#e6e6e6;-webkit-text-stroke:0.3px #e6e6e6">S:</div>
<div class="a" style="left:1324px;top:352.9px;width:34px;height:19px;background:#434343;border:1px solid #5e5e5e"></div>
<div class="t" style="left:1327px;top:356.4px;font-size:12.5px;color:#ececec;-webkit-text-stroke:0.25px #ececec">0</div>
<svg class="a" style="left:1277px;top:378.9px" width="15" height="15"><circle cx="7.5" cy="7.5" r="5.9" fill="#4c4c4c" stroke="#7a7a7a" stroke-width="0.9"/></svg>
<div class="t" style="left:1299.5px;top:380.4px;font-size:12.5px;color:#e6e6e6;-webkit-text-stroke:0.3px #e6e6e6">B:</div>
<div class="a" style="left:1324px;top:376.9px;width:34px;height:19px;background:#434343;border:1px solid #5e5e5e"></div>
<div class="t" style="left:1327px;top:380.4px;font-size:12.5px;color:#ececec;-webkit-text-stroke:0.25px #ececec">0</div>
<svg class="a" style="left:1277px;top:407.0px" width="15" height="15"><circle cx="7.5" cy="7.5" r="5.9" fill="#4c4c4c" stroke="#7a7a7a" stroke-width="0.9"/></svg>
<div class="t" style="left:1299.5px;top:408.5px;font-size:12.5px;color:#e6e6e6;-webkit-text-stroke:0.3px #e6e6e6">R:</div>
<div class="a" style="left:1324px;top:405.0px;width:34px;height:19px;background:#434343;border:1px solid #5e5e5e"></div>
<div class="t" style="left:1327px;top:408.5px;font-size:12.5px;color:#ececec;-webkit-text-stroke:0.25px #ececec">0</div>
<svg class="a" style="left:1277px;top:430.9px" width="15" height="15"><circle cx="7.5" cy="7.5" r="5.9" fill="#4c4c4c" stroke="#7a7a7a" stroke-width="0.9"/></svg>
<div class="t" style="left:1299.5px;top:432.4px;font-size:12.5px;color:#e6e6e6;-webkit-text-stroke:0.3px #e6e6e6">G:</div>
<div class="a" style="left:1324px;top:428.9px;width:34px;height:19px;background:#434343;border:1px solid #5e5e5e"></div>
<div class="t" style="left:1327px;top:432.4px;font-size:12.5px;color:#ececec;-webkit-text-stroke:0.25px #ececec">0</div>
<svg class="a" style="left:1277px;top:454.9px" width="15" height="15"><circle cx="7.5" cy="7.5" r="5.9" fill="#4c4c4c" stroke="#7a7a7a" stroke-width="0.9"/></svg>
<div class="t" style="left:1299.5px;top:456.4px;font-size:12.5px;color:#e6e6e6;-webkit-text-stroke:0.3px #e6e6e6">B:</div>
<div class="a" style="left:1324px;top:452.9px;width:34px;height:19px;background:#434343;border:1px solid #5e5e5e"></div>
<div class="t" style="left:1327px;top:456.4px;font-size:12.5px;color:#ececec;-webkit-text-stroke:0.25px #ececec">0</div>
<div class="t" style="left:1361px;top:332.6px;font-size:12px;color:#e0e0e0">度</div>
<div class="t" style="left:1361px;top:356.4px;font-size:12.5px;color:#e0e0e0;-webkit-text-stroke:0.25px #e0e0e0">%</div>
<div class="t" style="left:1361px;top:380.4px;font-size:12.5px;color:#e0e0e0;-webkit-text-stroke:0.25px #e0e0e0">%</div>
<svg class="a" style="left:1383px;top:331.1px" width="15" height="15"><circle cx="7.5" cy="7.5" r="5.9" fill="#4c4c4c" stroke="#7a7a7a" stroke-width="0.9"/></svg>
<div class="t" style="left:1406px;top:332.6px;font-size:12.5px;color:#e6e6e6;-webkit-text-stroke:0.3px #e6e6e6">L:</div>
<div class="a" style="left:1428px;top:329.1px;width:43px;height:19px;background:#434343;border:1px solid #5e5e5e"></div>
<div class="t" style="left:1431px;top:332.6px;font-size:12.5px;color:#ececec;-webkit-text-stroke:0.25px #ececec">0</div>
<svg class="a" style="left:1383px;top:354.9px" width="15" height="15"><circle cx="7.5" cy="7.5" r="5.9" fill="#4c4c4c" stroke="#7a7a7a" stroke-width="0.9"/></svg>
<div class="t" style="left:1406px;top:356.4px;font-size:12.5px;color:#e6e6e6;-webkit-text-stroke:0.3px #e6e6e6">a:</div>
<div class="a" style="left:1428px;top:352.9px;width:43px;height:19px;background:#434343;border:1px solid #5e5e5e"></div>
<div class="t" style="left:1431px;top:356.4px;font-size:12.5px;color:#ececec;-webkit-text-stroke:0.25px #ececec">0</div>
<svg class="a" style="left:1383px;top:378.9px" width="15" height="15"><circle cx="7.5" cy="7.5" r="5.9" fill="#4c4c4c" stroke="#7a7a7a" stroke-width="0.9"/></svg>
<div class="t" style="left:1406px;top:380.4px;font-size:12.5px;color:#e6e6e6;-webkit-text-stroke:0.3px #e6e6e6">b:</div>
<div class="a" style="left:1428px;top:376.9px;width:43px;height:19px;background:#434343;border:1px solid #5e5e5e"></div>
<div class="t" style="left:1431px;top:380.4px;font-size:12.5px;color:#ececec;-webkit-text-stroke:0.25px #ececec">0</div>
<div class="t" style="left:1394px;width:30px;text-align:right;top:408.5px;font-size:12.5px;color:#e6e6e6;-webkit-text-stroke:0.3px #e6e6e6">C:</div>
<div class="a" style="left:1428px;top:405.0px;width:34px;height:19px;background:#434343;border:1px solid #5e5e5e"></div>
<div class="t" style="left:1431px;top:408.5px;font-size:12.5px;color:#ececec;-webkit-text-stroke:0.25px #ececec">93</div>
<div class="t" style="left:1466px;top:408.5px;font-size:12.5px;color:#e0e0e0;-webkit-text-stroke:0.25px #e0e0e0">%</div>
<div class="t" style="left:1394px;width:30px;text-align:right;top:432.4px;font-size:12.5px;color:#e6e6e6;-webkit-text-stroke:0.3px #e6e6e6">M:</div>
<div class="a" style="left:1428px;top:428.9px;width:34px;height:19px;background:#434343;border:1px solid #5e5e5e"></div>
<div class="t" style="left:1431px;top:432.4px;font-size:12.5px;color:#ececec;-webkit-text-stroke:0.25px #ececec">88</div>
<div class="t" style="left:1466px;top:432.4px;font-size:12.5px;color:#e0e0e0;-webkit-text-stroke:0.25px #e0e0e0">%</div>
<div class="t" style="left:1394px;width:30px;text-align:right;top:456.4px;font-size:12.5px;color:#e6e6e6;-webkit-text-stroke:0.3px #e6e6e6">Y:</div>
<div class="a" style="left:1428px;top:452.9px;width:34px;height:19px;background:#434343;border:1px solid #5e5e5e"></div>
<div class="t" style="left:1431px;top:456.4px;font-size:12.5px;color:#ececec;-webkit-text-stroke:0.25px #ececec">89</div>
<div class="t" style="left:1466px;top:456.4px;font-size:12.5px;color:#e0e0e0;-webkit-text-stroke:0.25px #e0e0e0">%</div>
<div class="t" style="left:1394px;width:30px;text-align:right;top:480.7px;font-size:12.5px;color:#e6e6e6;-webkit-text-stroke:0.3px #e6e6e6">K:</div>
<div class="a" style="left:1428px;top:477.2px;width:34px;height:19px;background:#434343;border:1px solid #5e5e5e"></div>
<div class="t" style="left:1431px;top:480.7px;font-size:12.5px;color:#ececec;-webkit-text-stroke:0.25px #ececec">80</div>
<div class="t" style="left:1466px;top:480.7px;font-size:12.5px;color:#e0e0e0;-webkit-text-stroke:0.25px #e0e0e0">%</div>
<div class="t" style="left:1278px;top:484px;font-size:12.5px;color:#e6e6e6">#</div>
<div class="a" style="left:1291px;top:481px;width:84px;height:19px;background:#434343;border:1.5px solid #3e70d8"></div>
<div class="a" style="left:1293px;top:483px;width:46px;height:15px;background:#4d74bc"></div>
<div class="t" style="left:1293.5px;top:485px;font-size:12.5px;color:#e8eefa;-webkit-text-stroke:0.3px #e8eefa">000000</div>
<div class="a" style="left:978px;top:457px;width:12px;height:12px;border:1px solid #8a8a8a;border-radius:2px;background:#4e4e4e"></div>
<div class="t" style="left:1000px;top:457px;font-size:12px;color:#e6e6e6">只有 Web 颜色</div>
<div class="a" style="left:0;top:0;width:1919px;height:991px;opacity:0.72;pointer-events:none">
<div class="t" style="left:1470px;top:827px;font-size:80px;font-weight:bold;color:#ffffff;letter-spacing:-2px;-webkit-text-stroke:1.2px #ffffff">Bai</div>
<svg class="a" style="left:1590px;top:785px" width="100" height="115" viewBox="1590 785 100 115"><g fill="#ffffff"><ellipse cx="1603.7" cy="828.8" rx="12.5" ry="16.5" transform="rotate(-12 1603.7 828.8)"/><ellipse cx="1627.8" cy="804.7" rx="12" ry="16"/><ellipse cx="1658.6" cy="806.6" rx="12.5" ry="16" transform="rotate(8 1658.6 806.6)"/><ellipse cx="1678" cy="836.5" rx="12.5" ry="15.5" transform="rotate(12 1678 836.5)"/><path d="M1641 831 C1628 831 1620 845 1610 856 C1600 866 1597 872 1598 882 C1600 893 1612 896 1625 894 C1633 893 1637 892 1641 892 C1647 892 1652 894 1660 895 C1674 896 1684 889 1684 878 C1684 868 1677 861 1670 853 C1660 842 1654 831 1641 831 Z"/></g><g stroke="#5a5a5a" stroke-width="5" fill="none" stroke-linejoin="round"><path d="M1636.5 849 V883.5 M1636.5 871 C1636.5 862 1631 858 1625 858 C1618 858 1614 864 1614 871 C1614 878 1618 883 1625 883 C1631 883 1636.5 879 1636.5 871"/><path d="M1645 858 V874 C1645 880 1649 883.5 1654 883.5 C1659 883.5 1663 880 1663 874 M1663 858 V883.5"/></g></svg>
<div class="t" style="left:1694px;top:836px;font-size:58px;font-weight:bold;color:#ffffff;-webkit-text-stroke:1.5px #ffffff">经验</div>
<div class="t" style="left:1474px;top:907px;font-size:39px;color:#ffffff;transform-origin:0 0;transform:scaleX(1.09);-webkit-text-stroke:0.7px #ffffff">jingyan.baidu.com</div>
</div>
</body></html>
